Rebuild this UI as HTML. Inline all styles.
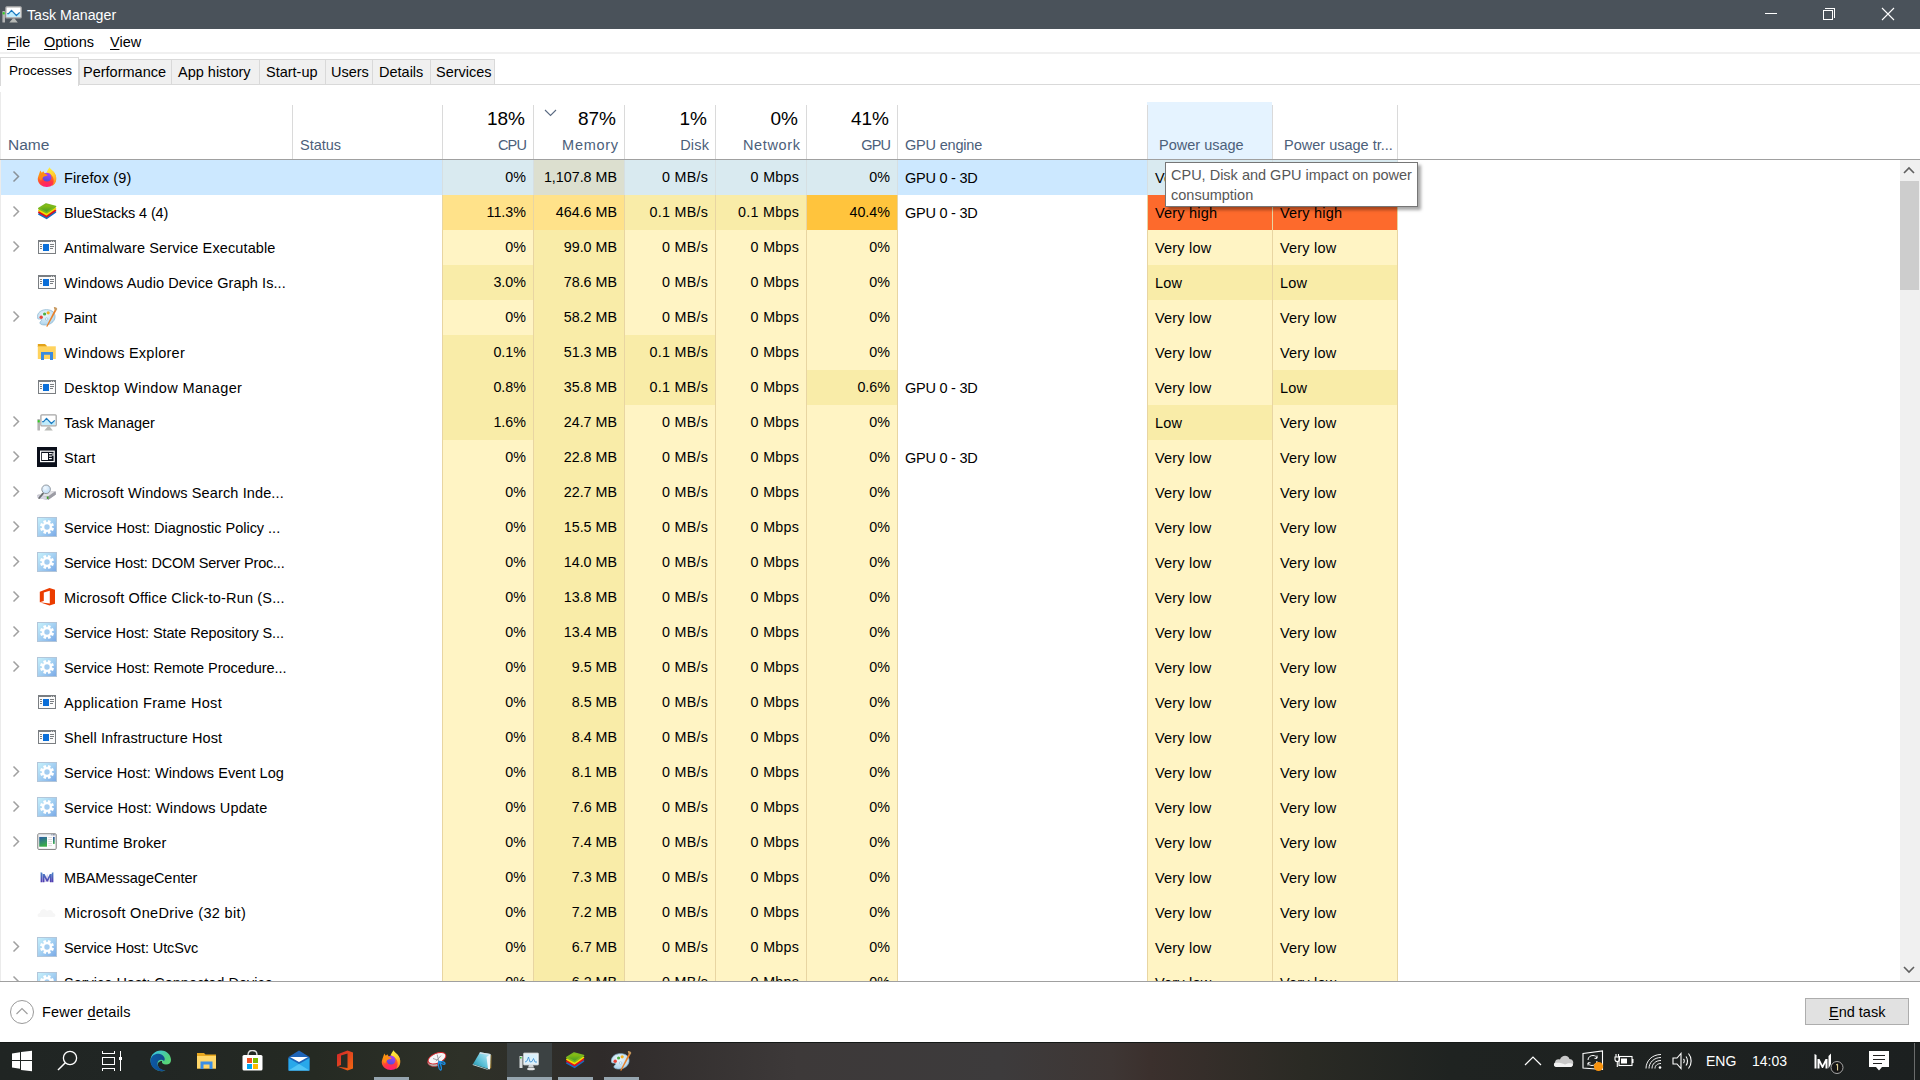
<!DOCTYPE html><html><head><meta charset="utf-8"><style>
*{margin:0;padding:0;box-sizing:border-box}
html,body{width:1920px;height:1080px;overflow:hidden;background:#fff;font-family:"Liberation Sans",sans-serif;color:#000}
.a{position:absolute}
.t{position:absolute;white-space:nowrap;font-size:14.5px;line-height:18px}
.u{text-decoration:underline;text-underline-offset:2px}
.hd{color:#4c607a}
.num{font-size:14.3px}
</style></head><body>

<div class="a" style="left:0;top:0;width:1920px;height:29px;background:#4a525a"></div>
<div class="a" style="left:2px;top:4px"><svg width="21" height="20" viewBox="0 0 21 20"><rect x="3.9" y="2.8" width="15.3" height="11" rx="0.9" fill="#fff" stroke="#a6a6a6" stroke-width="1.3"/><path d="M4.8 13 L4.8 9.6 L6.6 9.6 L9.5 6.3 L14.4 11.5 L17.7 8.4 L18.1 8.4 L18.1 13Z" fill="#c0ecfc"/><path d="M5.2 9.6 L6.6 9.6 L9.5 6.3 L14.4 11.5 L17.7 8.4" fill="none" stroke="#1a7ac0" stroke-width="1.2" stroke-linejoin="round"/><path d="M10.8 14.4 L12.6 14.4 L15.8 18.4 L7.3 18.4Z" fill="#b8bab6"/><rect x="0.4" y="7" width="2.6" height="11.6" rx="0.6" fill="#b4b4b4"/><rect x="0.7" y="8.2" width="2" height="2.2" fill="#30d020"/></svg></div>
<div class="t" style="left:27px;top:6px;color:#fff;font-size:14.2px">Task Manager</div>
<div class="a" style="left:1765px;top:13px;width:12px;height:1px;background:#fff"></div>
<div class="a" style="left:1823px;top:10px;width:10px;height:10px;border:1px solid #fff"></div>
<div class="a" style="left:1825px;top:8px;width:10px;height:10px;border-top:1px solid #fff;border-right:1px solid #fff"></div>
<svg class="a" style="left:1881px;top:7px" width="14" height="14"><path d="M1 1 L13 13 M13 1 L1 13" stroke="#fff" stroke-width="1.1"/></svg>
<div class="t" style="left:7px;top:33px"><span class="u">F</span>ile</div>
<div class="t" style="left:44px;top:33px"><span class="u">O</span>ptions</div>
<div class="t" style="left:110px;top:33px"><span class="u">V</span>iew</div>
<div class="a" style="left:0;top:52px;width:1920px;height:2px;background:#f0f0f0"></div>
<div class="a" style="left:0;top:84px;width:1920px;height:1px;background:#d9d9d9"></div>
<div class="a" style="left:0px;top:57px;width:79px;height:29px;background:#fff;border:1px solid #d9d9d9;border-bottom:none"></div>
<div class="t" style="left:9px;top:62px;font-size:13.5px">Processes</div>
<div class="a" style="left:79px;top:59px;width:93px;height:26px;background:#f0f0f0;border:1px solid #d9d9d9"></div>
<div class="t" style="left:83px;top:63px">Performance</div>
<div class="a" style="left:171px;top:59px;width:89px;height:26px;background:#f0f0f0;border:1px solid #d9d9d9"></div>
<div class="t" style="left:178px;top:63px">App history</div>
<div class="a" style="left:259px;top:59px;width:67px;height:26px;background:#f0f0f0;border:1px solid #d9d9d9"></div>
<div class="t" style="left:266px;top:63px">Start-up</div>
<div class="a" style="left:325px;top:59px;width:48px;height:26px;background:#f0f0f0;border:1px solid #d9d9d9"></div>
<div class="t" style="left:331px;top:63px">Users</div>
<div class="a" style="left:372px;top:59px;width:59px;height:26px;background:#f0f0f0;border:1px solid #d9d9d9"></div>
<div class="t" style="left:379px;top:63px">Details</div>
<div class="a" style="left:430px;top:59px;width:65px;height:26px;background:#f0f0f0;border:1px solid #d9d9d9"></div>
<div class="t" style="left:436px;top:63px">Services</div>
<div class="a" style="left:0;top:92px;width:1px;height:889px;background:#ebebeb"></div>
<div class="a" style="left:1147px;top:102px;width:125px;height:57px;background:#e5f3ff"></div>
<div class="a" style="left:292px;top:105px;width:1px;height:54px;background:#dadada"></div>
<div class="a" style="left:442px;top:105px;width:1px;height:54px;background:#dadada"></div>
<div class="a" style="left:533px;top:105px;width:1px;height:54px;background:#dadada"></div>
<div class="a" style="left:624px;top:105px;width:1px;height:54px;background:#dadada"></div>
<div class="a" style="left:715px;top:105px;width:1px;height:54px;background:#dadada"></div>
<div class="a" style="left:806px;top:105px;width:1px;height:54px;background:#dadada"></div>
<div class="a" style="left:897px;top:105px;width:1px;height:54px;background:#dadada"></div>
<div class="a" style="left:1147px;top:105px;width:1px;height:54px;background:#dadada"></div>
<div class="a" style="left:1272px;top:105px;width:1px;height:54px;background:#dadada"></div>
<div class="a" style="left:1397px;top:105px;width:1px;height:54px;background:#dadada"></div>
<div class="a" style="left:0;top:159px;width:1920px;height:1px;background:#a0a0a0"></div>
<div class="t hd" style="left:8px;top:136px;font-size:15.5px">Name</div>
<div class="t hd" style="left:300px;top:136px">Status</div>
<div class="t" style="left:442px;width:83px;top:107px;text-align:right;font-size:19px;line-height:24px">18%</div>
<div class="t hd" style="left:442px;width:84.25px;top:136px;text-align:right;letter-spacing:-0.75px">CPU</div>
<div class="t" style="left:533px;width:83px;top:107px;text-align:right;font-size:19px;line-height:24px">87%</div>
<div class="t hd" style="left:533px;width:85.70px;top:136px;text-align:right;letter-spacing:0.7px">Memory</div>
<div class="t" style="left:624px;width:83px;top:107px;text-align:right;font-size:19px;line-height:24px">1%</div>
<div class="t hd" style="left:624px;width:85.20px;top:136px;text-align:right;letter-spacing:0.2px">Disk</div>
<div class="t" style="left:715px;width:83px;top:107px;text-align:right;font-size:19px;line-height:24px">0%</div>
<div class="t hd" style="left:715px;width:85.65px;top:136px;text-align:right;letter-spacing:0.65px">Network</div>
<div class="t" style="left:806px;width:83px;top:107px;text-align:right;font-size:19px;line-height:24px">41%</div>
<div class="t hd" style="left:806px;width:84.10px;top:136px;text-align:right;letter-spacing:-0.9px">GPU</div>
<svg class="a" style="left:544px;top:109px" width="13" height="8"><path d="M1 1 L6.5 6.5 L12 1" fill="none" stroke="#5a6a82" stroke-width="1.1"/></svg>
<div class="t hd" style="left:905px;top:136px;letter-spacing:-0.2px">GPU engine</div>
<div class="t hd" style="left:1159px;top:136px">Power usage</div>
<div class="t hd" style="left:1284px;top:136px">Power usage tr...</div>
<div class="a" style="left:1px;top:160px;width:1898px;height:821px;overflow:hidden">
<div class="a" style="left:0;top:0px;width:1396px;height:35px;background:#cce8ff"></div>
<div class="a" style="left:441px;top:0px;width:91px;height:35px;background:#d9eaf0"></div>
<div class="a" style="left:532px;top:0px;width:91px;height:35px;background:#dcdfcf"></div>
<div class="a" style="left:623px;top:0px;width:91px;height:35px;background:#d9eaf0"></div>
<div class="a" style="left:714px;top:0px;width:91px;height:35px;background:#d9eaf0"></div>
<div class="a" style="left:805px;top:0px;width:91px;height:35px;background:#d9eaf0"></div>
<div class="a" style="left:1146px;top:0px;width:125px;height:35px;background:#d9eaf0"></div>
<div class="a" style="left:1271px;top:0px;width:125px;height:35px;background:#d9eaf0"></div>
<svg class="a" style="left:11px;top:10px" width="9" height="13"><path d="M1.5 1.5 L6.5 6.5 L1.5 11.5" fill="none" stroke="#8a9299" stroke-width="1.5"/></svg>
<div class="a" style="left:36px;top:7px;width:21px;height:20px"><svg width="20" height="20" viewBox="0 0 20 20"><defs><radialGradient id="ffg" cx="0.5" cy="0.95" r="0.9"><stop offset="0" stop-color="#ff1a7a"/><stop offset="0.45" stop-color="#ff3a40"/><stop offset="0.8" stop-color="#ff7a1a"/><stop offset="1" stop-color="#ffa010"/></radialGradient><linearGradient id="ffy" x1="0.2" y1="0" x2="0.6" y2="1"><stop offset="0" stop-color="#fff040"/><stop offset="0.5" stop-color="#ffd030"/><stop offset="1" stop-color="#ff8a20"/></linearGradient><linearGradient id="ffp" x1="0.6" y1="0" x2="0.3" y2="1"><stop offset="0" stop-color="#b040f8"/><stop offset="1" stop-color="#4a50d8"/></linearGradient></defs><path d="M2.2 7.5 C1 9.5 0.6 11.5 0.8 13 C1.5 17 5 20 9.8 20 C14.5 20 18 17 19 13 C19.5 10 18.5 7 16.5 4.8 L9.5 6 Z" fill="url(#ffg)"/><path d="M9.4 5.6 C10.2 3.5 11.5 1.8 12.5 0.2 C13.4 2 15.2 3.2 16.5 4.6 C18.6 7 19.6 10 19.2 13 C18.8 15.8 17.2 18 15 19.2 C16.8 16.5 17.3 13 16 10.2 C14.8 7.8 12.2 6 9.4 5.6 Z" fill="url(#ffy)"/><path d="M1.6 8.5 L3.3 3.6 L4.8 5.7 L6.3 4.2 L7.6 6.3 L5 9Z" fill="#ff9410"/><circle cx="10" cy="10.2" r="4.4" fill="url(#ffp)"/><path d="M2 9.5 C3 7 5.5 6 8 6.6 C9 6.9 9.8 7.6 10.6 8.7 C8.8 8.9 7 9.2 5.8 10.4 C5 11.2 4.5 12.5 4.3 13.5 C3 12.5 1.8 11 2 9.5Z" fill="#ff8c14"/></svg></div>
<div class="t" style="left:63px;top:9px;letter-spacing:0.120px">Firefox (9)</div>
<div class="t num" style="left:441px;width:84.00px;top:8px;text-align:right;letter-spacing:0px">0%</div>
<div class="t num" style="left:532px;width:84.00px;top:8px;text-align:right;letter-spacing:0px">1,107.8 MB</div>
<div class="t num" style="left:623px;width:84.30px;top:8px;text-align:right;letter-spacing:0.3px">0 MB/s</div>
<div class="t num" style="left:714px;width:84.30px;top:8px;text-align:right;letter-spacing:0.3px">0 Mbps</div>
<div class="t num" style="left:805px;width:84.00px;top:8px;text-align:right;letter-spacing:0px">0%</div>
<div class="t" style="left:904px;top:9px;letter-spacing:-0.25px">GPU 0 - 3D</div>
<div class="t" style="left:1154px;top:9px;letter-spacing:0.2px">Very low</div>
<div class="t" style="left:1279px;top:9px;letter-spacing:0.2px">Very low</div>
<div class="a" style="left:441px;top:35px;width:91px;height:35px;background:#ffe28a"></div>
<div class="a" style="left:532px;top:35px;width:91px;height:35px;background:#ffe28a"></div>
<div class="a" style="left:623px;top:35px;width:91px;height:35px;background:#f9eca8"></div>
<div class="a" style="left:714px;top:35px;width:91px;height:35px;background:#f9eca8"></div>
<div class="a" style="left:805px;top:35px;width:91px;height:35px;background:#ffc43d"></div>
<div class="a" style="left:1146px;top:35px;width:125px;height:35px;background:#fd6a2c"></div>
<div class="a" style="left:1271px;top:35px;width:125px;height:35px;background:#fd6a2c"></div>
<svg class="a" style="left:11px;top:45px" width="9" height="13"><path d="M1.5 1.5 L6.5 6.5 L1.5 11.5" fill="none" stroke="#a0a0a0" stroke-width="1.5"/></svg>
<div class="a" style="left:36px;top:42px;width:21px;height:20px"><svg width="20" height="20" viewBox="0 0 20 20"><defs><linearGradient id="bsg" x1="0.5" y1="0" x2="0.5" y2="1"><stop offset="0" stop-color="#9cc40a"/><stop offset="1" stop-color="#3a9a2a"/></linearGradient></defs><path d="M1.8 12.1 L9.1 7.6 L18.5 10.1 L9.6 16.4Z" fill="#1a6ac0" stroke="#1a6ac0" stroke-width="1.6" stroke-linejoin="round"/><path d="M1.8 10.3 L9.1 5.8 L18.5 8.3 L9.6 14.6Z" fill="#e0101e" stroke="#e0101e" stroke-width="1.6" stroke-linejoin="round"/><path d="M1.8 8.4 L9.1 3.9 L18.5 6.4 L9.6 12.7Z" fill="#f6dc00" stroke="#f6dc00" stroke-width="1.6" stroke-linejoin="round"/><path d="M1.8 6.5 L9.1 2.0 L18.5 4.5 L9.6 10.8Z" fill="url(#bsg)" stroke="#7ab820" stroke-width="1.6" stroke-linejoin="round"/></svg></div>
<div class="t" style="left:63px;top:44px;letter-spacing:-0.133px">BlueStacks 4 (4)</div>
<div class="t num" style="left:441px;width:84.00px;top:43px;text-align:right;letter-spacing:0px">11.3%</div>
<div class="t num" style="left:532px;width:84.00px;top:43px;text-align:right;letter-spacing:0px">464.6 MB</div>
<div class="t num" style="left:623px;width:84.30px;top:43px;text-align:right;letter-spacing:0.3px">0.1 MB/s</div>
<div class="t num" style="left:714px;width:84.30px;top:43px;text-align:right;letter-spacing:0.3px">0.1 Mbps</div>
<div class="t num" style="left:805px;width:84.00px;top:43px;text-align:right;letter-spacing:0px">40.4%</div>
<div class="t" style="left:904px;top:44px;letter-spacing:-0.25px">GPU 0 - 3D</div>
<div class="t" style="left:1154px;top:44px;letter-spacing:0.2px">Very high</div>
<div class="t" style="left:1279px;top:44px;letter-spacing:0.2px">Very high</div>
<div class="a" style="left:441px;top:70px;width:91px;height:35px;background:#fff4c4"></div>
<div class="a" style="left:532px;top:70px;width:91px;height:35px;background:#f9eca8"></div>
<div class="a" style="left:623px;top:70px;width:91px;height:35px;background:#fff4c4"></div>
<div class="a" style="left:714px;top:70px;width:91px;height:35px;background:#fff4c4"></div>
<div class="a" style="left:805px;top:70px;width:91px;height:35px;background:#fff4c4"></div>
<div class="a" style="left:1146px;top:70px;width:125px;height:35px;background:#fff4c4"></div>
<div class="a" style="left:1271px;top:70px;width:125px;height:35px;background:#fff4c4"></div>
<svg class="a" style="left:11px;top:80px" width="9" height="13"><path d="M1.5 1.5 L6.5 6.5 L1.5 11.5" fill="none" stroke="#a0a0a0" stroke-width="1.5"/></svg>
<div class="a" style="left:36px;top:77px;width:21px;height:20px"><svg width="20" height="20" viewBox="0 0 20 20"><g shape-rendering="crispEdges"><rect x="1" y="3" width="18" height="14" fill="#7a7e82"/><rect x="2" y="5" width="16" height="11" fill="#fbfbfb"/><rect x="14" y="4" width="1" height="1" fill="#d0d0d0"/><rect x="16" y="4" width="1" height="1" fill="#d0d0d0"/><rect x="6" y="7" width="6" height="7" fill="#0a6ed8"/><rect x="3" y="7" width="2" height="1" fill="#7a7e82"/><rect x="3" y="9" width="2" height="1" fill="#7a7e82"/><rect x="3" y="11" width="2" height="1" fill="#7a7e82"/><rect x="13" y="7" width="4" height="1" fill="#7a7e82"/><rect x="13" y="9" width="4" height="1" fill="#7a7e82"/><rect x="13" y="11" width="3" height="1" fill="#7a7e82"/></g></svg></div>
<div class="t" style="left:63px;top:79px;letter-spacing:0.121px">Antimalware Service Executable</div>
<div class="t num" style="left:441px;width:84.00px;top:78px;text-align:right;letter-spacing:0px">0%</div>
<div class="t num" style="left:532px;width:84.00px;top:78px;text-align:right;letter-spacing:0px">99.0 MB</div>
<div class="t num" style="left:623px;width:84.30px;top:78px;text-align:right;letter-spacing:0.3px">0 MB/s</div>
<div class="t num" style="left:714px;width:84.30px;top:78px;text-align:right;letter-spacing:0.3px">0 Mbps</div>
<div class="t num" style="left:805px;width:84.00px;top:78px;text-align:right;letter-spacing:0px">0%</div>
<div class="t" style="left:1154px;top:79px;letter-spacing:0.2px">Very low</div>
<div class="t" style="left:1279px;top:79px;letter-spacing:0.2px">Very low</div>
<div class="a" style="left:441px;top:105px;width:91px;height:35px;background:#f9eca8"></div>
<div class="a" style="left:532px;top:105px;width:91px;height:35px;background:#f9eca8"></div>
<div class="a" style="left:623px;top:105px;width:91px;height:35px;background:#fff4c4"></div>
<div class="a" style="left:714px;top:105px;width:91px;height:35px;background:#fff4c4"></div>
<div class="a" style="left:805px;top:105px;width:91px;height:35px;background:#fff4c4"></div>
<div class="a" style="left:1146px;top:105px;width:125px;height:35px;background:#f9eca8"></div>
<div class="a" style="left:1271px;top:105px;width:125px;height:35px;background:#f9eca8"></div>
<div class="a" style="left:36px;top:112px;width:21px;height:20px"><svg width="20" height="20" viewBox="0 0 20 20"><g shape-rendering="crispEdges"><rect x="1" y="3" width="18" height="14" fill="#7a7e82"/><rect x="2" y="5" width="16" height="11" fill="#fbfbfb"/><rect x="14" y="4" width="1" height="1" fill="#d0d0d0"/><rect x="16" y="4" width="1" height="1" fill="#d0d0d0"/><rect x="6" y="7" width="6" height="7" fill="#0a6ed8"/><rect x="3" y="7" width="2" height="1" fill="#7a7e82"/><rect x="3" y="9" width="2" height="1" fill="#7a7e82"/><rect x="3" y="11" width="2" height="1" fill="#7a7e82"/><rect x="13" y="7" width="4" height="1" fill="#7a7e82"/><rect x="13" y="9" width="4" height="1" fill="#7a7e82"/><rect x="13" y="11" width="3" height="1" fill="#7a7e82"/></g></svg></div>
<div class="t" style="left:63px;top:114px;letter-spacing:0.081px">Windows Audio Device Graph Is...</div>
<div class="t num" style="left:441px;width:84.00px;top:113px;text-align:right;letter-spacing:0px">3.0%</div>
<div class="t num" style="left:532px;width:84.00px;top:113px;text-align:right;letter-spacing:0px">78.6 MB</div>
<div class="t num" style="left:623px;width:84.30px;top:113px;text-align:right;letter-spacing:0.3px">0 MB/s</div>
<div class="t num" style="left:714px;width:84.30px;top:113px;text-align:right;letter-spacing:0.3px">0 Mbps</div>
<div class="t num" style="left:805px;width:84.00px;top:113px;text-align:right;letter-spacing:0px">0%</div>
<div class="t" style="left:1154px;top:114px;letter-spacing:0.2px">Low</div>
<div class="t" style="left:1279px;top:114px;letter-spacing:0.2px">Low</div>
<div class="a" style="left:441px;top:140px;width:91px;height:35px;background:#fff4c4"></div>
<div class="a" style="left:532px;top:140px;width:91px;height:35px;background:#f9eca8"></div>
<div class="a" style="left:623px;top:140px;width:91px;height:35px;background:#fff4c4"></div>
<div class="a" style="left:714px;top:140px;width:91px;height:35px;background:#fff4c4"></div>
<div class="a" style="left:805px;top:140px;width:91px;height:35px;background:#fff4c4"></div>
<div class="a" style="left:1146px;top:140px;width:125px;height:35px;background:#fff4c4"></div>
<div class="a" style="left:1271px;top:140px;width:125px;height:35px;background:#fff4c4"></div>
<svg class="a" style="left:11px;top:150px" width="9" height="13"><path d="M1.5 1.5 L6.5 6.5 L1.5 11.5" fill="none" stroke="#a0a0a0" stroke-width="1.5"/></svg>
<div class="a" style="left:36px;top:147px;width:21px;height:20px"><svg width="21" height="20" viewBox="0 0 21 20"><defs><radialGradient id="pg" cx="0.45" cy="0.35" r="0.75"><stop offset="0" stop-color="#eef7fc"/><stop offset="0.7" stop-color="#bcdcf0"/><stop offset="1" stop-color="#9ac4e2"/></radialGradient></defs><g transform="translate(-1,0)"><path d="M1.5 8.5 C2.5 4 7.5 2 12.5 2.8 C17.5 3.6 19.5 7 19 10.5 C18.5 14.5 14.5 18 9 18 C5.5 18 3.5 17 4 15.3 C4.5 13.8 6 14.2 5.6 12.8 C5.2 11.6 2.5 12.6 1.6 11.4 C1 10.5 1.2 9.5 1.5 8.5Z" fill="url(#pg)" stroke="#88b4d0" stroke-width="0.7"/><circle cx="5.2" cy="10.2" r="1.7" fill="#e8463a"/><circle cx="8.6" cy="7" r="1.6" fill="#4cae44"/><circle cx="12.2" cy="5.8" r="1.6" fill="#f5b020"/><ellipse cx="10.6" cy="12" rx="1.3" ry="1.1" fill="#fff" stroke="#88b4d0" stroke-width="0.6"/><path d="M18.8 2.4 L20.4 3.4 L11.4 19.8 L10.2 19.4Z" fill="#e8802a"/><path d="M17.8 0.2 C19 -0.2 21 0.8 21.3 2 L20.2 3.8 L18.4 2.6Z" fill="#c89a60"/></g></svg></div>
<div class="t" style="left:63px;top:149px;letter-spacing:-0.075px">Paint</div>
<div class="t num" style="left:441px;width:84.00px;top:148px;text-align:right;letter-spacing:0px">0%</div>
<div class="t num" style="left:532px;width:84.00px;top:148px;text-align:right;letter-spacing:0px">58.2 MB</div>
<div class="t num" style="left:623px;width:84.30px;top:148px;text-align:right;letter-spacing:0.3px">0 MB/s</div>
<div class="t num" style="left:714px;width:84.30px;top:148px;text-align:right;letter-spacing:0.3px">0 Mbps</div>
<div class="t num" style="left:805px;width:84.00px;top:148px;text-align:right;letter-spacing:0px">0%</div>
<div class="t" style="left:1154px;top:149px;letter-spacing:0.2px">Very low</div>
<div class="t" style="left:1279px;top:149px;letter-spacing:0.2px">Very low</div>
<div class="a" style="left:441px;top:175px;width:91px;height:35px;background:#f9eca8"></div>
<div class="a" style="left:532px;top:175px;width:91px;height:35px;background:#f9eca8"></div>
<div class="a" style="left:623px;top:175px;width:91px;height:35px;background:#f9eca8"></div>
<div class="a" style="left:714px;top:175px;width:91px;height:35px;background:#fff4c4"></div>
<div class="a" style="left:805px;top:175px;width:91px;height:35px;background:#fff4c4"></div>
<div class="a" style="left:1146px;top:175px;width:125px;height:35px;background:#fff4c4"></div>
<div class="a" style="left:1271px;top:175px;width:125px;height:35px;background:#fff4c4"></div>
<div class="a" style="left:36px;top:182px;width:21px;height:20px"><svg width="20" height="20" viewBox="0 0 20 20"><g transform="translate(-1,0)"><path d="M1.8 2 L9 2 L10.8 3.8 L10.8 5 L1.8 5Z" fill="#e2a21a"/><path d="M1.8 4.3 L19.8 4.3 L19.8 17 L1.8 17Z" fill="#ffd35e"/><path d="M5 10 L17 10 L17 18 L14 18 L14 12.8 L8 12.8 L8 18 L5 18Z" fill="#3a8ae0"/></g></svg></div>
<div class="t" style="left:63px;top:184px;letter-spacing:0.260px">Windows Explorer</div>
<div class="t num" style="left:441px;width:84.00px;top:183px;text-align:right;letter-spacing:0px">0.1%</div>
<div class="t num" style="left:532px;width:84.00px;top:183px;text-align:right;letter-spacing:0px">51.3 MB</div>
<div class="t num" style="left:623px;width:84.30px;top:183px;text-align:right;letter-spacing:0.3px">0.1 MB/s</div>
<div class="t num" style="left:714px;width:84.30px;top:183px;text-align:right;letter-spacing:0.3px">0 Mbps</div>
<div class="t num" style="left:805px;width:84.00px;top:183px;text-align:right;letter-spacing:0px">0%</div>
<div class="t" style="left:1154px;top:184px;letter-spacing:0.2px">Very low</div>
<div class="t" style="left:1279px;top:184px;letter-spacing:0.2px">Very low</div>
<div class="a" style="left:441px;top:210px;width:91px;height:35px;background:#f9eca8"></div>
<div class="a" style="left:532px;top:210px;width:91px;height:35px;background:#f9eca8"></div>
<div class="a" style="left:623px;top:210px;width:91px;height:35px;background:#f9eca8"></div>
<div class="a" style="left:714px;top:210px;width:91px;height:35px;background:#fff4c4"></div>
<div class="a" style="left:805px;top:210px;width:91px;height:35px;background:#f9eca8"></div>
<div class="a" style="left:1146px;top:210px;width:125px;height:35px;background:#fff4c4"></div>
<div class="a" style="left:1271px;top:210px;width:125px;height:35px;background:#f9eca8"></div>
<div class="a" style="left:36px;top:217px;width:21px;height:20px"><svg width="20" height="20" viewBox="0 0 20 20"><g shape-rendering="crispEdges"><rect x="1" y="3" width="18" height="14" fill="#7a7e82"/><rect x="2" y="5" width="16" height="11" fill="#fbfbfb"/><rect x="14" y="4" width="1" height="1" fill="#d0d0d0"/><rect x="16" y="4" width="1" height="1" fill="#d0d0d0"/><rect x="6" y="7" width="6" height="7" fill="#0a6ed8"/><rect x="3" y="7" width="2" height="1" fill="#7a7e82"/><rect x="3" y="9" width="2" height="1" fill="#7a7e82"/><rect x="3" y="11" width="2" height="1" fill="#7a7e82"/><rect x="13" y="7" width="4" height="1" fill="#7a7e82"/><rect x="13" y="9" width="4" height="1" fill="#7a7e82"/><rect x="13" y="11" width="3" height="1" fill="#7a7e82"/></g></svg></div>
<div class="t" style="left:63px;top:219px;letter-spacing:0.376px">Desktop Window Manager</div>
<div class="t num" style="left:441px;width:84.00px;top:218px;text-align:right;letter-spacing:0px">0.8%</div>
<div class="t num" style="left:532px;width:84.00px;top:218px;text-align:right;letter-spacing:0px">35.8 MB</div>
<div class="t num" style="left:623px;width:84.30px;top:218px;text-align:right;letter-spacing:0.3px">0.1 MB/s</div>
<div class="t num" style="left:714px;width:84.30px;top:218px;text-align:right;letter-spacing:0.3px">0 Mbps</div>
<div class="t num" style="left:805px;width:84.00px;top:218px;text-align:right;letter-spacing:0px">0.6%</div>
<div class="t" style="left:904px;top:219px;letter-spacing:-0.25px">GPU 0 - 3D</div>
<div class="t" style="left:1154px;top:219px;letter-spacing:0.2px">Very low</div>
<div class="t" style="left:1279px;top:219px;letter-spacing:0.2px">Low</div>
<div class="a" style="left:441px;top:245px;width:91px;height:35px;background:#f9eca8"></div>
<div class="a" style="left:532px;top:245px;width:91px;height:35px;background:#f9eca8"></div>
<div class="a" style="left:623px;top:245px;width:91px;height:35px;background:#fff4c4"></div>
<div class="a" style="left:714px;top:245px;width:91px;height:35px;background:#fff4c4"></div>
<div class="a" style="left:805px;top:245px;width:91px;height:35px;background:#fff4c4"></div>
<div class="a" style="left:1146px;top:245px;width:125px;height:35px;background:#f9eca8"></div>
<div class="a" style="left:1271px;top:245px;width:125px;height:35px;background:#fff4c4"></div>
<svg class="a" style="left:11px;top:255px" width="9" height="13"><path d="M1.5 1.5 L6.5 6.5 L1.5 11.5" fill="none" stroke="#a0a0a0" stroke-width="1.5"/></svg>
<div class="a" style="left:36px;top:252px;width:21px;height:20px"><svg width="21" height="20" viewBox="0 0 21 20"><rect x="3.9" y="2.8" width="15.3" height="11" rx="0.9" fill="#fff" stroke="#a6a6a6" stroke-width="1.3"/><path d="M4.8 13 L4.8 9.6 L6.6 9.6 L9.5 6.3 L14.4 11.5 L17.7 8.4 L18.1 8.4 L18.1 13Z" fill="#c0ecfc"/><path d="M5.2 9.6 L6.6 9.6 L9.5 6.3 L14.4 11.5 L17.7 8.4" fill="none" stroke="#1a7ac0" stroke-width="1.2" stroke-linejoin="round"/><path d="M10.8 14.4 L12.6 14.4 L15.8 18.4 L7.3 18.4Z" fill="#b8bab6"/><rect x="0.4" y="7" width="2.6" height="11.6" rx="0.6" fill="#b4b4b4"/><rect x="0.7" y="8.2" width="2" height="2.2" fill="#30d020"/></svg></div>
<div class="t" style="left:63px;top:254px;letter-spacing:-0.018px">Task Manager</div>
<div class="t num" style="left:441px;width:84.00px;top:253px;text-align:right;letter-spacing:0px">1.6%</div>
<div class="t num" style="left:532px;width:84.00px;top:253px;text-align:right;letter-spacing:0px">24.7 MB</div>
<div class="t num" style="left:623px;width:84.30px;top:253px;text-align:right;letter-spacing:0.3px">0 MB/s</div>
<div class="t num" style="left:714px;width:84.30px;top:253px;text-align:right;letter-spacing:0.3px">0 Mbps</div>
<div class="t num" style="left:805px;width:84.00px;top:253px;text-align:right;letter-spacing:0px">0%</div>
<div class="t" style="left:1154px;top:254px;letter-spacing:0.2px">Low</div>
<div class="t" style="left:1279px;top:254px;letter-spacing:0.2px">Very low</div>
<div class="a" style="left:441px;top:280px;width:91px;height:35px;background:#fff4c4"></div>
<div class="a" style="left:532px;top:280px;width:91px;height:35px;background:#f9eca8"></div>
<div class="a" style="left:623px;top:280px;width:91px;height:35px;background:#fff4c4"></div>
<div class="a" style="left:714px;top:280px;width:91px;height:35px;background:#fff4c4"></div>
<div class="a" style="left:805px;top:280px;width:91px;height:35px;background:#fff4c4"></div>
<div class="a" style="left:1146px;top:280px;width:125px;height:35px;background:#fff4c4"></div>
<div class="a" style="left:1271px;top:280px;width:125px;height:35px;background:#fff4c4"></div>
<svg class="a" style="left:11px;top:290px" width="9" height="13"><path d="M1.5 1.5 L6.5 6.5 L1.5 11.5" fill="none" stroke="#a0a0a0" stroke-width="1.5"/></svg>
<div class="a" style="left:36px;top:287px;width:21px;height:20px"><svg width="20" height="20" viewBox="0 0 20 20"><rect x="0" y="0" width="20" height="20" fill="#0a0f1a"/><rect x="3.6" y="4.2" width="13.6" height="10.4" fill="none" stroke="#fff" stroke-width="1.2"/><rect x="5" y="6" width="6" height="7" fill="#fff"/><rect x="12" y="6" width="2.8" height="1.2" fill="#fff"/><rect x="12" y="8.5" width="2.8" height="1.2" fill="#fff"/><rect x="12" y="11" width="2.8" height="1.2" fill="#fff"/><rect x="15.5" y="6" width="1" height="3" fill="#fff"/></svg></div>
<div class="t" style="left:63px;top:289px;letter-spacing:0.175px">Start</div>
<div class="t num" style="left:441px;width:84.00px;top:288px;text-align:right;letter-spacing:0px">0%</div>
<div class="t num" style="left:532px;width:84.00px;top:288px;text-align:right;letter-spacing:0px">22.8 MB</div>
<div class="t num" style="left:623px;width:84.30px;top:288px;text-align:right;letter-spacing:0.3px">0 MB/s</div>
<div class="t num" style="left:714px;width:84.30px;top:288px;text-align:right;letter-spacing:0.3px">0 Mbps</div>
<div class="t num" style="left:805px;width:84.00px;top:288px;text-align:right;letter-spacing:0px">0%</div>
<div class="t" style="left:904px;top:289px;letter-spacing:-0.25px">GPU 0 - 3D</div>
<div class="t" style="left:1154px;top:289px;letter-spacing:0.2px">Very low</div>
<div class="t" style="left:1279px;top:289px;letter-spacing:0.2px">Very low</div>
<div class="a" style="left:441px;top:315px;width:91px;height:35px;background:#fff4c4"></div>
<div class="a" style="left:532px;top:315px;width:91px;height:35px;background:#f9eca8"></div>
<div class="a" style="left:623px;top:315px;width:91px;height:35px;background:#fff4c4"></div>
<div class="a" style="left:714px;top:315px;width:91px;height:35px;background:#fff4c4"></div>
<div class="a" style="left:805px;top:315px;width:91px;height:35px;background:#fff4c4"></div>
<div class="a" style="left:1146px;top:315px;width:125px;height:35px;background:#fff4c4"></div>
<div class="a" style="left:1271px;top:315px;width:125px;height:35px;background:#fff4c4"></div>
<svg class="a" style="left:11px;top:325px" width="9" height="13"><path d="M1.5 1.5 L6.5 6.5 L1.5 11.5" fill="none" stroke="#a0a0a0" stroke-width="1.5"/></svg>
<div class="a" style="left:36px;top:322px;width:21px;height:20px"><svg width="20" height="20" viewBox="0 0 20 20"><defs><radialGradient id="sg" cx="0.4" cy="0.35" r="0.7"><stop offset="0" stop-color="#f4faff"/><stop offset="1" stop-color="#b8d8f4"/></radialGradient></defs><path d="M0.3 13 L8 10.5 L18.4 9.1 L18.8 12.4 L11 17.9 L0.8 16Z" fill="#a8a8b0"/><path d="M0.3 13 L8 10.5 L18.4 9.1 L11 14.6Z" fill="#e4e4e8"/><path d="M0.5 13.2 L11 14.8 L11 17.9 L0.8 16Z" fill="#d8d6e4"/><path d="M11 14.8 L18.6 9.4 L18.8 12.4 L11 17.9Z" fill="#9c9ca4"/><rect x="9.8" y="14.5" width="1.6" height="2.4" fill="#3aa020"/><path d="M6 11.5 L2.2 16" stroke="#6a6e72" stroke-width="1.9" stroke-linecap="round"/><circle cx="9.1" cy="7.3" r="4.3" fill="url(#sg)" stroke="#8a9096" stroke-width="0.9"/></svg></div>
<div class="t" style="left:63px;top:324px;letter-spacing:0.119px">Microsoft Windows Search Inde...</div>
<div class="t num" style="left:441px;width:84.00px;top:323px;text-align:right;letter-spacing:0px">0%</div>
<div class="t num" style="left:532px;width:84.00px;top:323px;text-align:right;letter-spacing:0px">22.7 MB</div>
<div class="t num" style="left:623px;width:84.30px;top:323px;text-align:right;letter-spacing:0.3px">0 MB/s</div>
<div class="t num" style="left:714px;width:84.30px;top:323px;text-align:right;letter-spacing:0.3px">0 Mbps</div>
<div class="t num" style="left:805px;width:84.00px;top:323px;text-align:right;letter-spacing:0px">0%</div>
<div class="t" style="left:1154px;top:324px;letter-spacing:0.2px">Very low</div>
<div class="t" style="left:1279px;top:324px;letter-spacing:0.2px">Very low</div>
<div class="a" style="left:441px;top:350px;width:91px;height:35px;background:#fff4c4"></div>
<div class="a" style="left:532px;top:350px;width:91px;height:35px;background:#f9eca8"></div>
<div class="a" style="left:623px;top:350px;width:91px;height:35px;background:#fff4c4"></div>
<div class="a" style="left:714px;top:350px;width:91px;height:35px;background:#fff4c4"></div>
<div class="a" style="left:805px;top:350px;width:91px;height:35px;background:#fff4c4"></div>
<div class="a" style="left:1146px;top:350px;width:125px;height:35px;background:#fff4c4"></div>
<div class="a" style="left:1271px;top:350px;width:125px;height:35px;background:#fff4c4"></div>
<svg class="a" style="left:11px;top:360px" width="9" height="13"><path d="M1.5 1.5 L6.5 6.5 L1.5 11.5" fill="none" stroke="#a0a0a0" stroke-width="1.5"/></svg>
<div class="a" style="left:36px;top:357px;width:21px;height:20px"><svg width="20" height="20" viewBox="0 0 20 20"><defs><linearGradient id="gg" x1="0" y1="0" x2="1" y2="1"><stop offset="0" stop-color="#c8f2fc"/><stop offset="0.5" stop-color="#a4d0f2"/><stop offset="1" stop-color="#78a8e6"/></linearGradient></defs><rect x="0.5" y="0.5" width="19" height="19" fill="url(#gg)" stroke="#b2c6da" stroke-width="1"/><g fill="#fff" transform="rotate(22 10 10)"><circle cx="10" cy="10" r="5"/><rect x="8.6" y="3" width="2.8" height="14"/><rect x="3" y="8.6" width="14" height="2.8"/><rect x="8.6" y="3" width="2.8" height="14" transform="rotate(45 10 10)"/><rect x="8.6" y="3" width="2.8" height="14" transform="rotate(-45 10 10)"/></g><circle cx="10" cy="10" r="2.7" fill="#a4cdf0"/></svg></div>
<div class="t" style="left:63px;top:359px;letter-spacing:-0.018px">Service Host: Diagnostic Policy ...</div>
<div class="t num" style="left:441px;width:84.00px;top:358px;text-align:right;letter-spacing:0px">0%</div>
<div class="t num" style="left:532px;width:84.00px;top:358px;text-align:right;letter-spacing:0px">15.5 MB</div>
<div class="t num" style="left:623px;width:84.30px;top:358px;text-align:right;letter-spacing:0.3px">0 MB/s</div>
<div class="t num" style="left:714px;width:84.30px;top:358px;text-align:right;letter-spacing:0.3px">0 Mbps</div>
<div class="t num" style="left:805px;width:84.00px;top:358px;text-align:right;letter-spacing:0px">0%</div>
<div class="t" style="left:1154px;top:359px;letter-spacing:0.2px">Very low</div>
<div class="t" style="left:1279px;top:359px;letter-spacing:0.2px">Very low</div>
<div class="a" style="left:441px;top:385px;width:91px;height:35px;background:#fff4c4"></div>
<div class="a" style="left:532px;top:385px;width:91px;height:35px;background:#f9eca8"></div>
<div class="a" style="left:623px;top:385px;width:91px;height:35px;background:#fff4c4"></div>
<div class="a" style="left:714px;top:385px;width:91px;height:35px;background:#fff4c4"></div>
<div class="a" style="left:805px;top:385px;width:91px;height:35px;background:#fff4c4"></div>
<div class="a" style="left:1146px;top:385px;width:125px;height:35px;background:#fff4c4"></div>
<div class="a" style="left:1271px;top:385px;width:125px;height:35px;background:#fff4c4"></div>
<svg class="a" style="left:11px;top:395px" width="9" height="13"><path d="M1.5 1.5 L6.5 6.5 L1.5 11.5" fill="none" stroke="#a0a0a0" stroke-width="1.5"/></svg>
<div class="a" style="left:36px;top:392px;width:21px;height:20px"><svg width="20" height="20" viewBox="0 0 20 20"><defs><linearGradient id="gg" x1="0" y1="0" x2="1" y2="1"><stop offset="0" stop-color="#c8f2fc"/><stop offset="0.5" stop-color="#a4d0f2"/><stop offset="1" stop-color="#78a8e6"/></linearGradient></defs><rect x="0.5" y="0.5" width="19" height="19" fill="url(#gg)" stroke="#b2c6da" stroke-width="1"/><g fill="#fff" transform="rotate(22 10 10)"><circle cx="10" cy="10" r="5"/><rect x="8.6" y="3" width="2.8" height="14"/><rect x="3" y="8.6" width="14" height="2.8"/><rect x="8.6" y="3" width="2.8" height="14" transform="rotate(45 10 10)"/><rect x="8.6" y="3" width="2.8" height="14" transform="rotate(-45 10 10)"/></g><circle cx="10" cy="10" r="2.7" fill="#a4cdf0"/></svg></div>
<div class="t" style="left:63px;top:394px;letter-spacing:-0.203px">Service Host: DCOM Server Proc...</div>
<div class="t num" style="left:441px;width:84.00px;top:393px;text-align:right;letter-spacing:0px">0%</div>
<div class="t num" style="left:532px;width:84.00px;top:393px;text-align:right;letter-spacing:0px">14.0 MB</div>
<div class="t num" style="left:623px;width:84.30px;top:393px;text-align:right;letter-spacing:0.3px">0 MB/s</div>
<div class="t num" style="left:714px;width:84.30px;top:393px;text-align:right;letter-spacing:0.3px">0 Mbps</div>
<div class="t num" style="left:805px;width:84.00px;top:393px;text-align:right;letter-spacing:0px">0%</div>
<div class="t" style="left:1154px;top:394px;letter-spacing:0.2px">Very low</div>
<div class="t" style="left:1279px;top:394px;letter-spacing:0.2px">Very low</div>
<div class="a" style="left:441px;top:420px;width:91px;height:35px;background:#fff4c4"></div>
<div class="a" style="left:532px;top:420px;width:91px;height:35px;background:#f9eca8"></div>
<div class="a" style="left:623px;top:420px;width:91px;height:35px;background:#fff4c4"></div>
<div class="a" style="left:714px;top:420px;width:91px;height:35px;background:#fff4c4"></div>
<div class="a" style="left:805px;top:420px;width:91px;height:35px;background:#fff4c4"></div>
<div class="a" style="left:1146px;top:420px;width:125px;height:35px;background:#fff4c4"></div>
<div class="a" style="left:1271px;top:420px;width:125px;height:35px;background:#fff4c4"></div>
<svg class="a" style="left:11px;top:430px" width="9" height="13"><path d="M1.5 1.5 L6.5 6.5 L1.5 11.5" fill="none" stroke="#a0a0a0" stroke-width="1.5"/></svg>
<div class="a" style="left:36px;top:427px;width:21px;height:20px"><svg width="20" height="20" viewBox="0 0 20 20"><path d="M2.8 4.8 L12.5 1 L18 2.8 L18 16.8 L12.5 18.5 L2.8 15.3 L12.8 16.6 L12.8 3.8 L6.8 5.6 L6.8 14 L2.8 15.3Z" fill="#eb3c00"/></svg></div>
<div class="t" style="left:63px;top:429px;letter-spacing:0.168px">Microsoft Office Click-to-Run (S...</div>
<div class="t num" style="left:441px;width:84.00px;top:428px;text-align:right;letter-spacing:0px">0%</div>
<div class="t num" style="left:532px;width:84.00px;top:428px;text-align:right;letter-spacing:0px">13.8 MB</div>
<div class="t num" style="left:623px;width:84.30px;top:428px;text-align:right;letter-spacing:0.3px">0 MB/s</div>
<div class="t num" style="left:714px;width:84.30px;top:428px;text-align:right;letter-spacing:0.3px">0 Mbps</div>
<div class="t num" style="left:805px;width:84.00px;top:428px;text-align:right;letter-spacing:0px">0%</div>
<div class="t" style="left:1154px;top:429px;letter-spacing:0.2px">Very low</div>
<div class="t" style="left:1279px;top:429px;letter-spacing:0.2px">Very low</div>
<div class="a" style="left:441px;top:455px;width:91px;height:35px;background:#fff4c4"></div>
<div class="a" style="left:532px;top:455px;width:91px;height:35px;background:#f9eca8"></div>
<div class="a" style="left:623px;top:455px;width:91px;height:35px;background:#fff4c4"></div>
<div class="a" style="left:714px;top:455px;width:91px;height:35px;background:#fff4c4"></div>
<div class="a" style="left:805px;top:455px;width:91px;height:35px;background:#fff4c4"></div>
<div class="a" style="left:1146px;top:455px;width:125px;height:35px;background:#fff4c4"></div>
<div class="a" style="left:1271px;top:455px;width:125px;height:35px;background:#fff4c4"></div>
<svg class="a" style="left:11px;top:465px" width="9" height="13"><path d="M1.5 1.5 L6.5 6.5 L1.5 11.5" fill="none" stroke="#a0a0a0" stroke-width="1.5"/></svg>
<div class="a" style="left:36px;top:462px;width:21px;height:20px"><svg width="20" height="20" viewBox="0 0 20 20"><defs><linearGradient id="gg" x1="0" y1="0" x2="1" y2="1"><stop offset="0" stop-color="#c8f2fc"/><stop offset="0.5" stop-color="#a4d0f2"/><stop offset="1" stop-color="#78a8e6"/></linearGradient></defs><rect x="0.5" y="0.5" width="19" height="19" fill="url(#gg)" stroke="#b2c6da" stroke-width="1"/><g fill="#fff" transform="rotate(22 10 10)"><circle cx="10" cy="10" r="5"/><rect x="8.6" y="3" width="2.8" height="14"/><rect x="3" y="8.6" width="14" height="2.8"/><rect x="8.6" y="3" width="2.8" height="14" transform="rotate(45 10 10)"/><rect x="8.6" y="3" width="2.8" height="14" transform="rotate(-45 10 10)"/></g><circle cx="10" cy="10" r="2.7" fill="#a4cdf0"/></svg></div>
<div class="t" style="left:63px;top:464px;letter-spacing:-0.097px">Service Host: State Repository S...</div>
<div class="t num" style="left:441px;width:84.00px;top:463px;text-align:right;letter-spacing:0px">0%</div>
<div class="t num" style="left:532px;width:84.00px;top:463px;text-align:right;letter-spacing:0px">13.4 MB</div>
<div class="t num" style="left:623px;width:84.30px;top:463px;text-align:right;letter-spacing:0.3px">0 MB/s</div>
<div class="t num" style="left:714px;width:84.30px;top:463px;text-align:right;letter-spacing:0.3px">0 Mbps</div>
<div class="t num" style="left:805px;width:84.00px;top:463px;text-align:right;letter-spacing:0px">0%</div>
<div class="t" style="left:1154px;top:464px;letter-spacing:0.2px">Very low</div>
<div class="t" style="left:1279px;top:464px;letter-spacing:0.2px">Very low</div>
<div class="a" style="left:441px;top:490px;width:91px;height:35px;background:#fff4c4"></div>
<div class="a" style="left:532px;top:490px;width:91px;height:35px;background:#f9eca8"></div>
<div class="a" style="left:623px;top:490px;width:91px;height:35px;background:#fff4c4"></div>
<div class="a" style="left:714px;top:490px;width:91px;height:35px;background:#fff4c4"></div>
<div class="a" style="left:805px;top:490px;width:91px;height:35px;background:#fff4c4"></div>
<div class="a" style="left:1146px;top:490px;width:125px;height:35px;background:#fff4c4"></div>
<div class="a" style="left:1271px;top:490px;width:125px;height:35px;background:#fff4c4"></div>
<svg class="a" style="left:11px;top:500px" width="9" height="13"><path d="M1.5 1.5 L6.5 6.5 L1.5 11.5" fill="none" stroke="#a0a0a0" stroke-width="1.5"/></svg>
<div class="a" style="left:36px;top:497px;width:21px;height:20px"><svg width="20" height="20" viewBox="0 0 20 20"><defs><linearGradient id="gg" x1="0" y1="0" x2="1" y2="1"><stop offset="0" stop-color="#c8f2fc"/><stop offset="0.5" stop-color="#a4d0f2"/><stop offset="1" stop-color="#78a8e6"/></linearGradient></defs><rect x="0.5" y="0.5" width="19" height="19" fill="url(#gg)" stroke="#b2c6da" stroke-width="1"/><g fill="#fff" transform="rotate(22 10 10)"><circle cx="10" cy="10" r="5"/><rect x="8.6" y="3" width="2.8" height="14"/><rect x="3" y="8.6" width="14" height="2.8"/><rect x="8.6" y="3" width="2.8" height="14" transform="rotate(45 10 10)"/><rect x="8.6" y="3" width="2.8" height="14" transform="rotate(-45 10 10)"/></g><circle cx="10" cy="10" r="2.7" fill="#a4cdf0"/></svg></div>
<div class="t" style="left:63px;top:499px;letter-spacing:-0.047px">Service Host: Remote Procedure...</div>
<div class="t num" style="left:441px;width:84.00px;top:498px;text-align:right;letter-spacing:0px">0%</div>
<div class="t num" style="left:532px;width:84.00px;top:498px;text-align:right;letter-spacing:0px">9.5 MB</div>
<div class="t num" style="left:623px;width:84.30px;top:498px;text-align:right;letter-spacing:0.3px">0 MB/s</div>
<div class="t num" style="left:714px;width:84.30px;top:498px;text-align:right;letter-spacing:0.3px">0 Mbps</div>
<div class="t num" style="left:805px;width:84.00px;top:498px;text-align:right;letter-spacing:0px">0%</div>
<div class="t" style="left:1154px;top:499px;letter-spacing:0.2px">Very low</div>
<div class="t" style="left:1279px;top:499px;letter-spacing:0.2px">Very low</div>
<div class="a" style="left:441px;top:525px;width:91px;height:35px;background:#fff4c4"></div>
<div class="a" style="left:532px;top:525px;width:91px;height:35px;background:#f9eca8"></div>
<div class="a" style="left:623px;top:525px;width:91px;height:35px;background:#fff4c4"></div>
<div class="a" style="left:714px;top:525px;width:91px;height:35px;background:#fff4c4"></div>
<div class="a" style="left:805px;top:525px;width:91px;height:35px;background:#fff4c4"></div>
<div class="a" style="left:1146px;top:525px;width:125px;height:35px;background:#fff4c4"></div>
<div class="a" style="left:1271px;top:525px;width:125px;height:35px;background:#fff4c4"></div>
<div class="a" style="left:36px;top:532px;width:21px;height:20px"><svg width="20" height="20" viewBox="0 0 20 20"><g shape-rendering="crispEdges"><rect x="1" y="3" width="18" height="14" fill="#7a7e82"/><rect x="2" y="5" width="16" height="11" fill="#fbfbfb"/><rect x="14" y="4" width="1" height="1" fill="#d0d0d0"/><rect x="16" y="4" width="1" height="1" fill="#d0d0d0"/><rect x="6" y="7" width="6" height="7" fill="#0a6ed8"/><rect x="3" y="7" width="2" height="1" fill="#7a7e82"/><rect x="3" y="9" width="2" height="1" fill="#7a7e82"/><rect x="3" y="11" width="2" height="1" fill="#7a7e82"/><rect x="13" y="7" width="4" height="1" fill="#7a7e82"/><rect x="13" y="9" width="4" height="1" fill="#7a7e82"/><rect x="13" y="11" width="3" height="1" fill="#7a7e82"/></g></svg></div>
<div class="t" style="left:63px;top:534px;letter-spacing:0.333px">Application Frame Host</div>
<div class="t num" style="left:441px;width:84.00px;top:533px;text-align:right;letter-spacing:0px">0%</div>
<div class="t num" style="left:532px;width:84.00px;top:533px;text-align:right;letter-spacing:0px">8.5 MB</div>
<div class="t num" style="left:623px;width:84.30px;top:533px;text-align:right;letter-spacing:0.3px">0 MB/s</div>
<div class="t num" style="left:714px;width:84.30px;top:533px;text-align:right;letter-spacing:0.3px">0 Mbps</div>
<div class="t num" style="left:805px;width:84.00px;top:533px;text-align:right;letter-spacing:0px">0%</div>
<div class="t" style="left:1154px;top:534px;letter-spacing:0.2px">Very low</div>
<div class="t" style="left:1279px;top:534px;letter-spacing:0.2px">Very low</div>
<div class="a" style="left:441px;top:560px;width:91px;height:35px;background:#fff4c4"></div>
<div class="a" style="left:532px;top:560px;width:91px;height:35px;background:#f9eca8"></div>
<div class="a" style="left:623px;top:560px;width:91px;height:35px;background:#fff4c4"></div>
<div class="a" style="left:714px;top:560px;width:91px;height:35px;background:#fff4c4"></div>
<div class="a" style="left:805px;top:560px;width:91px;height:35px;background:#fff4c4"></div>
<div class="a" style="left:1146px;top:560px;width:125px;height:35px;background:#fff4c4"></div>
<div class="a" style="left:1271px;top:560px;width:125px;height:35px;background:#fff4c4"></div>
<div class="a" style="left:36px;top:567px;width:21px;height:20px"><svg width="20" height="20" viewBox="0 0 20 20"><g shape-rendering="crispEdges"><rect x="1" y="3" width="18" height="14" fill="#7a7e82"/><rect x="2" y="5" width="16" height="11" fill="#fbfbfb"/><rect x="14" y="4" width="1" height="1" fill="#d0d0d0"/><rect x="16" y="4" width="1" height="1" fill="#d0d0d0"/><rect x="6" y="7" width="6" height="7" fill="#0a6ed8"/><rect x="3" y="7" width="2" height="1" fill="#7a7e82"/><rect x="3" y="9" width="2" height="1" fill="#7a7e82"/><rect x="3" y="11" width="2" height="1" fill="#7a7e82"/><rect x="13" y="7" width="4" height="1" fill="#7a7e82"/><rect x="13" y="9" width="4" height="1" fill="#7a7e82"/><rect x="13" y="11" width="3" height="1" fill="#7a7e82"/></g></svg></div>
<div class="t" style="left:63px;top:569px;letter-spacing:0.108px">Shell Infrastructure Host</div>
<div class="t num" style="left:441px;width:84.00px;top:568px;text-align:right;letter-spacing:0px">0%</div>
<div class="t num" style="left:532px;width:84.00px;top:568px;text-align:right;letter-spacing:0px">8.4 MB</div>
<div class="t num" style="left:623px;width:84.30px;top:568px;text-align:right;letter-spacing:0.3px">0 MB/s</div>
<div class="t num" style="left:714px;width:84.30px;top:568px;text-align:right;letter-spacing:0.3px">0 Mbps</div>
<div class="t num" style="left:805px;width:84.00px;top:568px;text-align:right;letter-spacing:0px">0%</div>
<div class="t" style="left:1154px;top:569px;letter-spacing:0.2px">Very low</div>
<div class="t" style="left:1279px;top:569px;letter-spacing:0.2px">Very low</div>
<div class="a" style="left:441px;top:595px;width:91px;height:35px;background:#fff4c4"></div>
<div class="a" style="left:532px;top:595px;width:91px;height:35px;background:#f9eca8"></div>
<div class="a" style="left:623px;top:595px;width:91px;height:35px;background:#fff4c4"></div>
<div class="a" style="left:714px;top:595px;width:91px;height:35px;background:#fff4c4"></div>
<div class="a" style="left:805px;top:595px;width:91px;height:35px;background:#fff4c4"></div>
<div class="a" style="left:1146px;top:595px;width:125px;height:35px;background:#fff4c4"></div>
<div class="a" style="left:1271px;top:595px;width:125px;height:35px;background:#fff4c4"></div>
<svg class="a" style="left:11px;top:605px" width="9" height="13"><path d="M1.5 1.5 L6.5 6.5 L1.5 11.5" fill="none" stroke="#a0a0a0" stroke-width="1.5"/></svg>
<div class="a" style="left:36px;top:602px;width:21px;height:20px"><svg width="20" height="20" viewBox="0 0 20 20"><defs><linearGradient id="gg" x1="0" y1="0" x2="1" y2="1"><stop offset="0" stop-color="#c8f2fc"/><stop offset="0.5" stop-color="#a4d0f2"/><stop offset="1" stop-color="#78a8e6"/></linearGradient></defs><rect x="0.5" y="0.5" width="19" height="19" fill="url(#gg)" stroke="#b2c6da" stroke-width="1"/><g fill="#fff" transform="rotate(22 10 10)"><circle cx="10" cy="10" r="5"/><rect x="8.6" y="3" width="2.8" height="14"/><rect x="3" y="8.6" width="14" height="2.8"/><rect x="8.6" y="3" width="2.8" height="14" transform="rotate(45 10 10)"/><rect x="8.6" y="3" width="2.8" height="14" transform="rotate(-45 10 10)"/></g><circle cx="10" cy="10" r="2.7" fill="#a4cdf0"/></svg></div>
<div class="t" style="left:63px;top:604px;letter-spacing:0.050px">Service Host: Windows Event Log</div>
<div class="t num" style="left:441px;width:84.00px;top:603px;text-align:right;letter-spacing:0px">0%</div>
<div class="t num" style="left:532px;width:84.00px;top:603px;text-align:right;letter-spacing:0px">8.1 MB</div>
<div class="t num" style="left:623px;width:84.30px;top:603px;text-align:right;letter-spacing:0.3px">0 MB/s</div>
<div class="t num" style="left:714px;width:84.30px;top:603px;text-align:right;letter-spacing:0.3px">0 Mbps</div>
<div class="t num" style="left:805px;width:84.00px;top:603px;text-align:right;letter-spacing:0px">0%</div>
<div class="t" style="left:1154px;top:604px;letter-spacing:0.2px">Very low</div>
<div class="t" style="left:1279px;top:604px;letter-spacing:0.2px">Very low</div>
<div class="a" style="left:441px;top:630px;width:91px;height:35px;background:#fff4c4"></div>
<div class="a" style="left:532px;top:630px;width:91px;height:35px;background:#f9eca8"></div>
<div class="a" style="left:623px;top:630px;width:91px;height:35px;background:#fff4c4"></div>
<div class="a" style="left:714px;top:630px;width:91px;height:35px;background:#fff4c4"></div>
<div class="a" style="left:805px;top:630px;width:91px;height:35px;background:#fff4c4"></div>
<div class="a" style="left:1146px;top:630px;width:125px;height:35px;background:#fff4c4"></div>
<div class="a" style="left:1271px;top:630px;width:125px;height:35px;background:#fff4c4"></div>
<svg class="a" style="left:11px;top:640px" width="9" height="13"><path d="M1.5 1.5 L6.5 6.5 L1.5 11.5" fill="none" stroke="#a0a0a0" stroke-width="1.5"/></svg>
<div class="a" style="left:36px;top:637px;width:21px;height:20px"><svg width="20" height="20" viewBox="0 0 20 20"><defs><linearGradient id="gg" x1="0" y1="0" x2="1" y2="1"><stop offset="0" stop-color="#c8f2fc"/><stop offset="0.5" stop-color="#a4d0f2"/><stop offset="1" stop-color="#78a8e6"/></linearGradient></defs><rect x="0.5" y="0.5" width="19" height="19" fill="url(#gg)" stroke="#b2c6da" stroke-width="1"/><g fill="#fff" transform="rotate(22 10 10)"><circle cx="10" cy="10" r="5"/><rect x="8.6" y="3" width="2.8" height="14"/><rect x="3" y="8.6" width="14" height="2.8"/><rect x="8.6" y="3" width="2.8" height="14" transform="rotate(45 10 10)"/><rect x="8.6" y="3" width="2.8" height="14" transform="rotate(-45 10 10)"/></g><circle cx="10" cy="10" r="2.7" fill="#a4cdf0"/></svg></div>
<div class="t" style="left:63px;top:639px;letter-spacing:0.126px">Service Host: Windows Update</div>
<div class="t num" style="left:441px;width:84.00px;top:638px;text-align:right;letter-spacing:0px">0%</div>
<div class="t num" style="left:532px;width:84.00px;top:638px;text-align:right;letter-spacing:0px">7.6 MB</div>
<div class="t num" style="left:623px;width:84.30px;top:638px;text-align:right;letter-spacing:0.3px">0 MB/s</div>
<div class="t num" style="left:714px;width:84.30px;top:638px;text-align:right;letter-spacing:0.3px">0 Mbps</div>
<div class="t num" style="left:805px;width:84.00px;top:638px;text-align:right;letter-spacing:0px">0%</div>
<div class="t" style="left:1154px;top:639px;letter-spacing:0.2px">Very low</div>
<div class="t" style="left:1279px;top:639px;letter-spacing:0.2px">Very low</div>
<div class="a" style="left:441px;top:665px;width:91px;height:35px;background:#fff4c4"></div>
<div class="a" style="left:532px;top:665px;width:91px;height:35px;background:#f9eca8"></div>
<div class="a" style="left:623px;top:665px;width:91px;height:35px;background:#fff4c4"></div>
<div class="a" style="left:714px;top:665px;width:91px;height:35px;background:#fff4c4"></div>
<div class="a" style="left:805px;top:665px;width:91px;height:35px;background:#fff4c4"></div>
<div class="a" style="left:1146px;top:665px;width:125px;height:35px;background:#fff4c4"></div>
<div class="a" style="left:1271px;top:665px;width:125px;height:35px;background:#fff4c4"></div>
<svg class="a" style="left:11px;top:675px" width="9" height="13"><path d="M1.5 1.5 L6.5 6.5 L1.5 11.5" fill="none" stroke="#a0a0a0" stroke-width="1.5"/></svg>
<div class="a" style="left:36px;top:672px;width:21px;height:20px"><svg width="20" height="20" viewBox="0 0 20 20"><defs><linearGradient id="bg1" x1="0" y1="0" x2="0.3" y2="1"><stop offset="0" stop-color="#2a5aa8"/><stop offset="1" stop-color="#3aac48"/></linearGradient><linearGradient id="bg2" x1="0" y1="0" x2="0" y2="1"><stop offset="0" stop-color="#2a4aa8"/><stop offset="1" stop-color="#3ab448"/></linearGradient></defs><rect x="0.8" y="1.8" width="18.4" height="15.6" rx="1" fill="#fdfdfd" stroke="#7a7a7a" stroke-width="1"/><rect x="1.5" y="2.4" width="17" height="1" fill="#d8dce4"/><rect x="14.5" y="2.4" width="0.8" height="0.9" fill="#3a4a6a"/><rect x="16" y="2.4" width="0.8" height="0.9" fill="#3a4a6a"/><rect x="17.4" y="2.4" width="0.8" height="0.9" fill="#3a4a6a"/><rect x="2.2" y="4.9" width="7.8" height="9.8" fill="url(#bg1)"/><g fill="#d4d4d4"><rect x="11.3" y="5" width="3.7" height="0.8"/><rect x="11.3" y="7.1" width="3.7" height="0.8"/><rect x="11.3" y="9.1" width="3.7" height="0.8"/><rect x="11.3" y="11.1" width="3.7" height="0.8"/><rect x="11.3" y="13.3" width="3.7" height="0.8"/></g><rect x="16" y="4.9" width="1.7" height="7" fill="url(#bg2)"/></svg></div>
<div class="t" style="left:63px;top:674px;letter-spacing:0.123px">Runtime Broker</div>
<div class="t num" style="left:441px;width:84.00px;top:673px;text-align:right;letter-spacing:0px">0%</div>
<div class="t num" style="left:532px;width:84.00px;top:673px;text-align:right;letter-spacing:0px">7.4 MB</div>
<div class="t num" style="left:623px;width:84.30px;top:673px;text-align:right;letter-spacing:0.3px">0 MB/s</div>
<div class="t num" style="left:714px;width:84.30px;top:673px;text-align:right;letter-spacing:0.3px">0 Mbps</div>
<div class="t num" style="left:805px;width:84.00px;top:673px;text-align:right;letter-spacing:0px">0%</div>
<div class="t" style="left:1154px;top:674px;letter-spacing:0.2px">Very low</div>
<div class="t" style="left:1279px;top:674px;letter-spacing:0.2px">Very low</div>
<div class="a" style="left:441px;top:700px;width:91px;height:35px;background:#fff4c4"></div>
<div class="a" style="left:532px;top:700px;width:91px;height:35px;background:#f9eca8"></div>
<div class="a" style="left:623px;top:700px;width:91px;height:35px;background:#fff4c4"></div>
<div class="a" style="left:714px;top:700px;width:91px;height:35px;background:#fff4c4"></div>
<div class="a" style="left:805px;top:700px;width:91px;height:35px;background:#fff4c4"></div>
<div class="a" style="left:1146px;top:700px;width:125px;height:35px;background:#fff4c4"></div>
<div class="a" style="left:1271px;top:700px;width:125px;height:35px;background:#fff4c4"></div>
<div class="a" style="left:36px;top:707px;width:21px;height:20px"><svg width="20" height="20" viewBox="0 0 20 20"><defs><linearGradient id="mg" x1="0" y1="0" x2="0" y2="1"><stop offset="0" stop-color="#4a86c8"/><stop offset="1" stop-color="#5038b0"/></linearGradient></defs><path d="M5.5 6.5 L8 12 L10.3 7 L12.6 12 L14.8 6.5 L14.8 15 L5.5 15Z" fill="#d8d4ec"/><path d="M3.6 5.2 L5.4 5.8 L5.4 15.2 L3.6 15.2Z M5.8 7 L7.6 7 L10.2 12.2 L12.8 7 L14.6 7 L14.6 15.2 L13 15.2 L13 10.2 L10.8 14.6 L9.6 14.6 L7.4 10.2 L7.4 15.2 L5.8 15.2Z M14.8 5.8 L16.4 5.2 L16.4 15.2 L14.8 15.2Z" fill="url(#mg)"/></svg></div>
<div class="t" style="left:63px;top:709px;letter-spacing:-0.033px">MBAMessageCenter</div>
<div class="t num" style="left:441px;width:84.00px;top:708px;text-align:right;letter-spacing:0px">0%</div>
<div class="t num" style="left:532px;width:84.00px;top:708px;text-align:right;letter-spacing:0px">7.3 MB</div>
<div class="t num" style="left:623px;width:84.30px;top:708px;text-align:right;letter-spacing:0.3px">0 MB/s</div>
<div class="t num" style="left:714px;width:84.30px;top:708px;text-align:right;letter-spacing:0.3px">0 Mbps</div>
<div class="t num" style="left:805px;width:84.00px;top:708px;text-align:right;letter-spacing:0px">0%</div>
<div class="t" style="left:1154px;top:709px;letter-spacing:0.2px">Very low</div>
<div class="t" style="left:1279px;top:709px;letter-spacing:0.2px">Very low</div>
<div class="a" style="left:441px;top:735px;width:91px;height:35px;background:#fff4c4"></div>
<div class="a" style="left:532px;top:735px;width:91px;height:35px;background:#f9eca8"></div>
<div class="a" style="left:623px;top:735px;width:91px;height:35px;background:#fff4c4"></div>
<div class="a" style="left:714px;top:735px;width:91px;height:35px;background:#fff4c4"></div>
<div class="a" style="left:805px;top:735px;width:91px;height:35px;background:#fff4c4"></div>
<div class="a" style="left:1146px;top:735px;width:125px;height:35px;background:#fff4c4"></div>
<div class="a" style="left:1271px;top:735px;width:125px;height:35px;background:#fff4c4"></div>
<div class="a" style="left:36px;top:742px;width:21px;height:20px"><svg width="20" height="20" viewBox="0 0 20 20"><path d="M2 15 C0 15 0 11 3 11 C3 7 8 6 10 9 C12 7 16 8 16 11 C19 11 19 15 17 15Z" fill="#f6f6f6"/></svg></div>
<div class="t" style="left:63px;top:744px;letter-spacing:0.327px">Microsoft OneDrive (32 bit)</div>
<div class="t num" style="left:441px;width:84.00px;top:743px;text-align:right;letter-spacing:0px">0%</div>
<div class="t num" style="left:532px;width:84.00px;top:743px;text-align:right;letter-spacing:0px">7.2 MB</div>
<div class="t num" style="left:623px;width:84.30px;top:743px;text-align:right;letter-spacing:0.3px">0 MB/s</div>
<div class="t num" style="left:714px;width:84.30px;top:743px;text-align:right;letter-spacing:0.3px">0 Mbps</div>
<div class="t num" style="left:805px;width:84.00px;top:743px;text-align:right;letter-spacing:0px">0%</div>
<div class="t" style="left:1154px;top:744px;letter-spacing:0.2px">Very low</div>
<div class="t" style="left:1279px;top:744px;letter-spacing:0.2px">Very low</div>
<div class="a" style="left:441px;top:770px;width:91px;height:35px;background:#fff4c4"></div>
<div class="a" style="left:532px;top:770px;width:91px;height:35px;background:#f9eca8"></div>
<div class="a" style="left:623px;top:770px;width:91px;height:35px;background:#fff4c4"></div>
<div class="a" style="left:714px;top:770px;width:91px;height:35px;background:#fff4c4"></div>
<div class="a" style="left:805px;top:770px;width:91px;height:35px;background:#fff4c4"></div>
<div class="a" style="left:1146px;top:770px;width:125px;height:35px;background:#fff4c4"></div>
<div class="a" style="left:1271px;top:770px;width:125px;height:35px;background:#fff4c4"></div>
<svg class="a" style="left:11px;top:780px" width="9" height="13"><path d="M1.5 1.5 L6.5 6.5 L1.5 11.5" fill="none" stroke="#a0a0a0" stroke-width="1.5"/></svg>
<div class="a" style="left:36px;top:777px;width:21px;height:20px"><svg width="20" height="20" viewBox="0 0 20 20"><defs><linearGradient id="gg" x1="0" y1="0" x2="1" y2="1"><stop offset="0" stop-color="#c8f2fc"/><stop offset="0.5" stop-color="#a4d0f2"/><stop offset="1" stop-color="#78a8e6"/></linearGradient></defs><rect x="0.5" y="0.5" width="19" height="19" fill="url(#gg)" stroke="#b2c6da" stroke-width="1"/><g fill="#fff" transform="rotate(22 10 10)"><circle cx="10" cy="10" r="5"/><rect x="8.6" y="3" width="2.8" height="14"/><rect x="3" y="8.6" width="14" height="2.8"/><rect x="8.6" y="3" width="2.8" height="14" transform="rotate(45 10 10)"/><rect x="8.6" y="3" width="2.8" height="14" transform="rotate(-45 10 10)"/></g><circle cx="10" cy="10" r="2.7" fill="#a4cdf0"/></svg></div>
<div class="t" style="left:63px;top:779px;letter-spacing:-0.105px">Service Host: UtcSvc</div>
<div class="t num" style="left:441px;width:84.00px;top:778px;text-align:right;letter-spacing:0px">0%</div>
<div class="t num" style="left:532px;width:84.00px;top:778px;text-align:right;letter-spacing:0px">6.7 MB</div>
<div class="t num" style="left:623px;width:84.30px;top:778px;text-align:right;letter-spacing:0.3px">0 MB/s</div>
<div class="t num" style="left:714px;width:84.30px;top:778px;text-align:right;letter-spacing:0.3px">0 Mbps</div>
<div class="t num" style="left:805px;width:84.00px;top:778px;text-align:right;letter-spacing:0px">0%</div>
<div class="t" style="left:1154px;top:779px;letter-spacing:0.2px">Very low</div>
<div class="t" style="left:1279px;top:779px;letter-spacing:0.2px">Very low</div>
<div class="a" style="left:441px;top:805px;width:91px;height:35px;background:#fff4c4"></div>
<div class="a" style="left:532px;top:805px;width:91px;height:35px;background:#f9eca8"></div>
<div class="a" style="left:623px;top:805px;width:91px;height:35px;background:#fff4c4"></div>
<div class="a" style="left:714px;top:805px;width:91px;height:35px;background:#fff4c4"></div>
<div class="a" style="left:805px;top:805px;width:91px;height:35px;background:#fff4c4"></div>
<div class="a" style="left:1146px;top:805px;width:125px;height:35px;background:#fff4c4"></div>
<div class="a" style="left:1271px;top:805px;width:125px;height:35px;background:#fff4c4"></div>
<svg class="a" style="left:11px;top:815px" width="9" height="13"><path d="M1.5 1.5 L6.5 6.5 L1.5 11.5" fill="none" stroke="#a0a0a0" stroke-width="1.5"/></svg>
<div class="a" style="left:36px;top:812px;width:21px;height:20px"><svg width="20" height="20" viewBox="0 0 20 20"><defs><linearGradient id="gg" x1="0" y1="0" x2="1" y2="1"><stop offset="0" stop-color="#c8f2fc"/><stop offset="0.5" stop-color="#a4d0f2"/><stop offset="1" stop-color="#78a8e6"/></linearGradient></defs><rect x="0.5" y="0.5" width="19" height="19" fill="url(#gg)" stroke="#b2c6da" stroke-width="1"/><g fill="#fff" transform="rotate(22 10 10)"><circle cx="10" cy="10" r="5"/><rect x="8.6" y="3" width="2.8" height="14"/><rect x="3" y="8.6" width="14" height="2.8"/><rect x="8.6" y="3" width="2.8" height="14" transform="rotate(45 10 10)"/><rect x="8.6" y="3" width="2.8" height="14" transform="rotate(-45 10 10)"/></g><circle cx="10" cy="10" r="2.7" fill="#a4cdf0"/></svg></div>
<div class="t" style="left:63px;top:814px;letter-spacing:0.000px">Service Host: Connected Device...</div>
<div class="t num" style="left:441px;width:84.00px;top:813px;text-align:right;letter-spacing:0px">0%</div>
<div class="t num" style="left:532px;width:84.00px;top:813px;text-align:right;letter-spacing:0px">6.2 MB</div>
<div class="t num" style="left:623px;width:84.30px;top:813px;text-align:right;letter-spacing:0.3px">0 MB/s</div>
<div class="t num" style="left:714px;width:84.30px;top:813px;text-align:right;letter-spacing:0.3px">0 Mbps</div>
<div class="t num" style="left:805px;width:84.00px;top:813px;text-align:right;letter-spacing:0px">0%</div>
<div class="t" style="left:1154px;top:814px;letter-spacing:0.2px">Very low</div>
<div class="t" style="left:1279px;top:814px;letter-spacing:0.2px">Very low</div>
<div class="a" style="left:441px;top:0;width:1px;height:821px;background:#e8d5a2"></div>
<div class="a" style="left:441px;top:0;width:1px;height:35px;background:#d6dfe2"></div>
<div class="a" style="left:532px;top:0;width:1px;height:821px;background:#e8d5a2"></div>
<div class="a" style="left:532px;top:0;width:1px;height:35px;background:#d6dfe2"></div>
<div class="a" style="left:623px;top:0;width:1px;height:821px;background:#e8d5a2"></div>
<div class="a" style="left:623px;top:0;width:1px;height:35px;background:#d6dfe2"></div>
<div class="a" style="left:714px;top:0;width:1px;height:821px;background:#e8d5a2"></div>
<div class="a" style="left:714px;top:0;width:1px;height:35px;background:#d6dfe2"></div>
<div class="a" style="left:805px;top:0;width:1px;height:821px;background:#e8d5a2"></div>
<div class="a" style="left:805px;top:0;width:1px;height:35px;background:#d6dfe2"></div>
<div class="a" style="left:896px;top:0;width:1px;height:821px;background:#e8d5a2"></div>
<div class="a" style="left:896px;top:0;width:1px;height:35px;background:#d6dfe2"></div>
<div class="a" style="left:1146px;top:0;width:1px;height:821px;background:#e8d5a2"></div>
<div class="a" style="left:1146px;top:0;width:1px;height:35px;background:#d6dfe2"></div>
<div class="a" style="left:1271px;top:0;width:1px;height:821px;background:#e8d5a2"></div>
<div class="a" style="left:1271px;top:0;width:1px;height:35px;background:#d6dfe2"></div>
<div class="a" style="left:1396px;top:0;width:1px;height:821px;background:#e8d5a2"></div>
<div class="a" style="left:1396px;top:0;width:1px;height:35px;background:#d6dfe2"></div>
</div>
<div class="a" style="left:1900px;top:160px;width:20px;height:821px;background:#f0f0f0"></div>
<svg class="a" style="left:1902px;top:164px" width="14" height="12"><path d="M2 9 L7 4 L12 9" fill="none" stroke="#606060" stroke-width="1.6"/></svg>
<div class="a" style="left:1900px;top:181px;width:19px;height:109px;background:#cdcdcd"></div>
<svg class="a" style="left:1902px;top:964px" width="14" height="12"><path d="M2 3 L7 8 L12 3" fill="none" stroke="#606060" stroke-width="1.6"/></svg>
<div class="a" style="left:0;top:981px;width:1920px;height:1px;background:#a0a0a0"></div>
<div class="a" style="left:1165px;top:162px;width:253px;height:45px;background:#fff;border:1px solid #767676;box-shadow:3px 3px 3px rgba(0,0,0,0.35)"></div>
<div class="t" style="left:1171px;top:165px;color:#575757;line-height:20px">CPU, Disk and GPU impact on power<br>consumption</div>
<div class="a" style="left:10px;top:1000px;width:24px;height:24px;border:1px solid #9a9a9a;border-radius:50%"></div>
<svg class="a" style="left:15px;top:1006px" width="14" height="10"><path d="M1.5 8 L7 2.5 L12.5 8" fill="none" stroke="#a0a0a0" stroke-width="1.2"/></svg>
<div class="t" style="left:42px;top:1003px;letter-spacing:0.19px">Fewer <span class="u">d</span>etails</div>
<div class="a" style="left:1805px;top:998px;width:104px;height:27px;background:#e1e1e1;border:1px solid #adadad"></div>
<div class="t" style="left:1829px;top:1003px"><span class="u">E</span>nd task</div>
<div class="a" style="left:0;top:1042px;width:1920px;height:38px;background:linear-gradient(90deg,#202523 0px,#212624 140px,#252a23 315px,#2e3128 462px,#2f2b2a 600px,#3d3939 797px,#3d3b3c 1000px,#3e3634 1112px,#3b302d 1150px,#2a2a24 1307px,#1f2321 1450px,#1c2020 1920px)"></div>
<div class="a" style="left:0;top:1042px;width:1920px;height:1px;background:#151917"></div>
<div class="a" style="left:507px;top:1043px;width:45px;height:37px;background:#3c4243"></div>
<div class="a" style="left:374px;top:1077px;width:35px;height:3px;background:#96a5af"></div>
<div class="a" style="left:507px;top:1077px;width:45px;height:3px;background:#96a5af"></div>
<div class="a" style="left:558px;top:1077px;width:35px;height:3px;background:#96a5af"></div>
<div class="a" style="left:604px;top:1077px;width:35px;height:3px;background:#96a5af"></div>
<svg class="a" style="left:12px;top:1050px" width="21" height="22" viewBox="0 0 21 22"><path d="M0 3.4 L8 2.3 L8 10 L0 10Z M9 2.1 L20 0.7 L20 10 L9 10Z M0 11 L8 11 L8 18.7 L0 17.6Z M9 11 L20 11 L20 21.2 L9 19.9Z" fill="#fff"/></svg>
<svg class="a" style="left:56px;top:1050px" width="22" height="22" viewBox="0 0 22 22"><circle cx="14" cy="8" r="6.6" fill="none" stroke="#fff" stroke-width="1.3"/><path d="M9.3 12.7 L2 20" stroke="#fff" stroke-width="1.5"/></svg>
<svg class="a" style="left:101px;top:1050px" width="22" height="22" viewBox="0 0 22 22"><g fill="#fff" shape-rendering="crispEdges"><rect x="1" y="1" width="1" height="3"/><rect x="13" y="1" width="1" height="3"/><rect x="1" y="3" width="13" height="1"/><rect x="1" y="7" width="13" height="1"/><rect x="1" y="14" width="13" height="1"/><rect x="1" y="7" width="1" height="8"/><rect x="13" y="7" width="1" height="8"/><rect x="1" y="18" width="13" height="1"/><rect x="1" y="18" width="1" height="3"/><rect x="13" y="18" width="1" height="3"/><rect x="19" y="1" width="1" height="20"/><rect x="18" y="7" width="3" height="3"/></g></svg>
<svg class="a" style="left:150px;top:1050px" width="22" height="22" viewBox="0 0 22 22"><defs><linearGradient id="eg1" x1="0" y1="0" x2="1" y2="1"><stop offset="0" stop-color="#35c1f1"/><stop offset="0.6" stop-color="#52d17e"/><stop offset="1" stop-color="#66e070"/></linearGradient><linearGradient id="eg2" x1="0" y1="0" x2="1" y2="0"><stop offset="0" stop-color="#0c59a4"/><stop offset="1" stop-color="#114a8b"/></linearGradient></defs><path d="M11 0.5 C17 0.5 21 5 21 10 C21 13 19 14.5 16 14.5 C13 14.5 11.5 13 12 11 C9 11 7 13.5 8 16 C9 19 12.5 20.8 15.5 20.5 C13 21.5 10.5 21.5 8 20.5 C3 18.5 0.5 14 0.5 10 C0.5 5 5 0.5 11 0.5Z" fill="url(#eg1)"/><path d="M0.5 10 C1.5 5 6 3 10 4 C14 5 16 9 14 11 C12 9 8 9.5 7.5 13 C7 16.5 10.5 20 15.5 20.5 C12 22 6 21 3 17.5 C1 15.5 0.3 12.5 0.5 10Z" fill="url(#eg2)"/></svg>
<svg class="a" style="left:197px;top:1052px" width="20" height="17" viewBox="0 0 20 17"><path d="M0 1 L7 1 L8.5 2.5 L19 2.5 L19 16.5 L0 16.5Z" fill="#e8a820"/><path d="M0 4 L19 4 L19 16.5 L0 16.5Z" fill="#ffd76a"/><path d="M3.5 9.5 L15.5 9.5 L15.5 17 L12.5 17 L12.5 12.5 L6.5 12.5 L6.5 17 L3.5 17Z" fill="#3a8ee6"/></svg>
<svg class="a" style="left:242px;top:1050px" width="21" height="21" viewBox="0 0 21 21"><path d="M6 5 C6 1 8 0.5 10.5 0.5 C13 0.5 15 1 15 5" fill="none" stroke="#ddd" stroke-width="1.3"/><rect x="0.5" y="5" width="20" height="15.5" rx="1.5" fill="#fff"/><rect x="5" y="8" width="5" height="5" fill="#f25022"/><rect x="11" y="8" width="5" height="5" fill="#7fba00"/><rect x="5" y="14" width="5" height="5" fill="#00a4ef"/><rect x="11" y="14" width="5" height="5" fill="#ffb900"/></svg>
<svg class="a" style="left:288px;top:1050px" width="22" height="21" viewBox="0 0 22 21"><path d="M0.5 7 L11 0.5 L21.5 7 L21.5 20.5 L0.5 20.5Z" fill="#1e64b8"/><path d="M2 7 L20 7 L11 12Z" fill="#fff"/><path d="M0.5 8 L11 14 L21.5 8 L21.5 20.5 L0.5 20.5Z" fill="#28a8ea"/><path d="M0.5 20.5 L11 14 L21.5 20.5Z" fill="#50c4f5"/></svg>
<svg class="a" style="left:336px;top:1050px" width="18" height="21" viewBox="0 0 18 21"><defs><linearGradient id="og" x1="0" y1="0" x2="1" y2="1"><stop offset="0" stop-color="#d2232b"/><stop offset="1" stop-color="#f06a10"/></linearGradient></defs><path d="M1 4.5 L11.5 0.5 L17 2.5 L17 18.5 L11.5 20.5 L1 16.5 L11.5 18 L11.5 3.5 L5 5.5 L5 15 L1 16.5Z" fill="url(#og)"/></svg>
<svg class="a" style="left:381px;top:1050px" width="20" height="21" viewBox="0 0 20 21"><g><defs><radialGradient id="tffg" cx="0.5" cy="0.95" r="0.9"><stop offset="0" stop-color="#ff1a7a"/><stop offset="0.45" stop-color="#ff3a40"/><stop offset="0.8" stop-color="#ff7a1a"/><stop offset="1" stop-color="#ffa010"/></radialGradient><linearGradient id="tffy" x1="0.2" y1="0" x2="0.6" y2="1"><stop offset="0" stop-color="#fff040"/><stop offset="0.5" stop-color="#ffd030"/><stop offset="1" stop-color="#ff8a20"/></linearGradient><linearGradient id="tffp" x1="0.6" y1="0" x2="0.3" y2="1"><stop offset="0" stop-color="#b040f8"/><stop offset="1" stop-color="#4a50d8"/></linearGradient></defs><path d="M2.2 7.5 C1 9.5 0.6 11.5 0.8 13 C1.5 17 5 20 9.8 20 C14.5 20 18 17 19 13 C19.5 10 18.5 7 16.5 4.8 L9.5 6 Z" fill="url(#tffg)"/><path d="M9.4 5.6 C10.2 3.5 11.5 1.8 12.5 0.2 C13.4 2 15.2 3.2 16.5 4.6 C18.6 7 19.6 10 19.2 13 C18.8 15.8 17.2 18 15 19.2 C16.8 16.5 17.3 13 16 10.2 C14.8 7.8 12.2 6 9.4 5.6 Z" fill="url(#tffy)"/><path d="M1.6 8.5 L3.3 3.6 L4.8 5.7 L6.3 4.2 L7.6 6.3 L5 9Z" fill="#ff9410"/><circle cx="10" cy="10.2" r="4.4" fill="url(#tffp)"/><path d="M2 9.5 C3 7 5.5 6 8 6.6 C9 6.9 9.8 7.6 10.6 8.7 C8.8 8.9 7 9.2 5.8 10.4 C5 11.2 4.5 12.5 4.3 13.5 C3 12.5 1.8 11 2 9.5Z" fill="#ff8c14"/></g></svg>
<svg class="a" style="left:427px;top:1051px" width="21" height="21" viewBox="0 0 21 21"><path d="M0.6 10.5 C0.2 13 3 15.5 7 15.6 C9 15.6 10.5 15 11 14.5 L10 11 Z" fill="#b4b4b4" stroke="#d02a30" stroke-width="0.6"/><ellipse cx="10" cy="7.2" rx="9.4" ry="4.9" transform="rotate(-22 10 7.2)" fill="#f6f6f8" stroke="#d8282e" stroke-width="0.9"/><path d="M10.2 3.6 L11.8 10.6 M14 4.6 L9 10.2 M6 7.5 L10.5 9" stroke="#8a8a90" stroke-width="0.8" fill="none"/><path d="M11.8 10.5 C11 13 11.5 18.5 13.4 19 C15 19.3 14.8 15 12.2 11.2 C14.5 12.5 18.5 14.5 18 12.2 C17.5 10.5 14 10.5 11.8 10.5Z" fill="none" stroke="#1a8ae0" stroke-width="1.3"/></svg>
<svg class="a" style="left:472px;top:1052px" width="21" height="19" viewBox="0 0 21 19"><defs><linearGradient id="npg" x1="0" y1="1" x2="1" y2="0"><stop offset="0" stop-color="#1a8aa0"/><stop offset="0.45" stop-color="#5cc0d8"/><stop offset="1" stop-color="#c8eef8"/></linearGradient></defs><path d="M18.4 2.6 L19.4 3.2 L19.2 16.2 L18.2 16.6Z" fill="#b88a30"/><path d="M8 0.3 L18.4 1.9 L18 17.3 L0.9 12.3Z" fill="url(#npg)"/><path d="M14.5 5 L18.4 2.2 L18 17.3 L16 17.2Z" fill="#eef4f8"/><path d="M8 0.3 L18.4 1.9 L18.2 3 L7.3 1.6Z" fill="#d8e2ea"/><path d="M0.9 12.3 L16 17.2 L15.5 17.8 L0.6 12.9Z" fill="#c8e8f0"/></svg>
<svg class="a" style="left:519px;top:1052px" width="21" height="19" viewBox="0 0 21 19"><rect x="4.5" y="1" width="15" height="12" rx="0.8" fill="#eef2f4" stroke="#c0c6ca" stroke-width="0.8"/><rect x="5.8" y="2.3" width="12.4" height="9.4" fill="#d8f0fc"/><path d="M6 10 L8 9 L9.5 5 L11 10 L13 9.5 L14.5 6.5 L16 10 L18 10" fill="none" stroke="#3a8ad0" stroke-width="0.8"/><path d="M10 13 L14 13 L15 15.5 L9 15.5Z" fill="#d0d4d8"/><ellipse cx="12" cy="17" rx="4" ry="1.3" fill="#e0e2e4"/><rect x="0.5" y="4" width="3" height="12" fill="#d8dcde"/><rect x="1" y="5" width="1.5" height="1.5" fill="#30c030"/></svg>
<svg class="a" style="left:565px;top:1051px" width="20" height="20" viewBox="0 0 20 20"><defs><linearGradient id="tbsg" x1="0.5" y1="0" x2="0.5" y2="1"><stop offset="0" stop-color="#9cc40a"/><stop offset="1" stop-color="#3a9a2a"/></linearGradient></defs><path d="M1.8 12.1 L9.1 7.6 L18.5 10.1 L9.6 16.4Z" fill="#1a6ac0" stroke="#1a6ac0" stroke-width="1.6" stroke-linejoin="round"/><path d="M1.8 10.3 L9.1 5.8 L18.5 8.3 L9.6 14.6Z" fill="#e0101e" stroke="#e0101e" stroke-width="1.6" stroke-linejoin="round"/><path d="M1.8 8.4 L9.1 3.9 L18.5 6.4 L9.6 12.7Z" fill="#f6dc00" stroke="#f6dc00" stroke-width="1.6" stroke-linejoin="round"/><path d="M1.8 6.5 L9.1 2.0 L18.5 4.5 L9.6 10.8Z" fill="url(#tbsg)" stroke="#7ab820" stroke-width="1.6" stroke-linejoin="round"/></svg>
<svg class="a" style="left:611px;top:1051px" width="21" height="20" viewBox="0 0 21 20"><defs><radialGradient id="tpg" cx="0.45" cy="0.35" r="0.75"><stop offset="0" stop-color="#eef7fc"/><stop offset="0.7" stop-color="#bcdcf0"/><stop offset="1" stop-color="#9ac4e2"/></radialGradient></defs><g transform="translate(-1,0)"><path d="M1.5 8.5 C2.5 4 7.5 2 12.5 2.8 C17.5 3.6 19.5 7 19 10.5 C18.5 14.5 14.5 18 9 18 C5.5 18 3.5 17 4 15.3 C4.5 13.8 6 14.2 5.6 12.8 C5.2 11.6 2.5 12.6 1.6 11.4 C1 10.5 1.2 9.5 1.5 8.5Z" fill="url(#tpg)" stroke="#88b4d0" stroke-width="0.7"/><circle cx="5.2" cy="10.2" r="1.7" fill="#e8463a"/><circle cx="8.6" cy="7" r="1.6" fill="#4cae44"/><circle cx="12.2" cy="5.8" r="1.6" fill="#f5b020"/><ellipse cx="10.6" cy="12" rx="1.3" ry="1.1" fill="#fff" stroke="#88b4d0" stroke-width="0.6"/><path d="M18.8 2.4 L20.4 3.4 L11.4 19.8 L10.2 19.4Z" fill="#e8802a"/><path d="M17.8 0.2 C19 -0.2 21 0.8 21.3 2 L20.2 3.8 L18.4 2.6Z" fill="#c89a60"/></g></svg>
<svg class="a" style="left:1524px;top:1055px" width="18" height="11" viewBox="0 0 18 11"><path d="M1 10 L9 2 L17 10" fill="none" stroke="#fff" stroke-width="1.2"/></svg>
<svg class="a" style="left:1553px;top:1054px" width="21" height="14" viewBox="0 0 21 14"><path d="M4 13 C1 13 0 10 2 8.5 C2 5.5 5 4.5 7 5.5 C8.5 1 15 0.5 16.5 5 C19.5 5 21 8 20 10 C20 12 18.5 13 17 13Z" fill="#c8c8c8"/><path d="M4 13 C1 13 0 10.5 2 9 C5 8.5 9 9 12 10.5 C15 9 18.5 8.5 20 10.5 C19.5 12.5 18.5 13 17 13Z" fill="#f2f2f2"/></svg>
<svg class="a" style="left:1582px;top:1050px" width="22" height="22" viewBox="0 0 22 22"><path d="M1 3.5 L20.5 1 L20.5 19.5 L1 18Z" fill="none" stroke="#fff" stroke-width="1.1"/><path d="M6 10 C6 7 8.5 5.5 11 5.5 C13 5.5 14.5 6.5 15 8 M15 5.5 L15 8.3 L12.5 8.3 M15 11 C15 14 12.5 15.5 10 15.5 C8 15.5 6.5 14.5 6 13 M6 15.5 L6 12.8 L8.5 12.8" fill="none" stroke="#fff" stroke-width="1"/><circle cx="16.5" cy="16.5" r="4.6" fill="#f7930e"/></svg>
<svg class="a" style="left:1613px;top:1053px" width="21" height="15" viewBox="0 0 21 15"><path d="M3 1 L3 4 M5.5 1 L5.5 4 M2 4 L6.5 4 L6.5 6.5 C6.5 8 5.5 8.5 4.3 8.5 C3 8.5 2 8 2 6.5Z M4.3 8.5 L4.3 14" fill="none" stroke="#fff" stroke-width="1.1"/><rect x="6" y="3.5" width="13" height="9" fill="none" stroke="#fff" stroke-width="1.1"/><rect x="8" y="5.5" width="6" height="5" fill="#fff"/><rect x="19" y="6" width="1.5" height="4" fill="#fff"/></svg>
<svg class="a" style="left:1645px;top:1053px" width="17" height="16" viewBox="0 0 17 16"><path d="M1 15.5 C1 8 7 1.5 16 1.5 M4 15.5 C4 9.5 9 4.5 16 4.5 M7 15.5 C7 11 10.5 7.5 16 7.5 M10 15.5 C10 12.5 12.5 10.5 16 10.5" fill="none" stroke="#fff" stroke-width="1" opacity="0.95"/><circle cx="15" cy="14.5" r="1.3" fill="#fff"/></svg>
<svg class="a" style="left:1672px;top:1051px" width="21" height="20" viewBox="0 0 21 20"><path d="M1 7 L5 7 L9 2.5 L9 17.5 L5 13 L1 13Z" fill="none" stroke="#fff" stroke-width="1.1"/><path d="M11.5 8 C12.5 9 12.5 11 11.5 12 M14 5.5 C16 8 16 12 14 14.5 M16.5 2.5 C20 6.5 20 13.5 16.5 17.5" fill="none" stroke="#fff" stroke-width="1.1"/></svg>
<svg class="a" style="left:1814px;top:1053px" width="32" height="24" viewBox="0 0 32 24"><path d="M0.5 1 L2.5 2 L2.5 15.5 L0.5 15.5Z M3.5 6 L5.5 6 L8.5 12 L11.5 6 L13.5 6 L13.5 15.5 L11.5 15.5 L11.5 10 L9 15 L8 15 L5.5 10 L5.5 15.5 L3.5 15.5Z M14.5 3 L17 0.5 L17 11 L14.5 15.5Z" fill="#fff"/><circle cx="23" cy="14.5" r="6" fill="#141414" stroke="#a8a8a8" stroke-width="1"/><path d="M22 12 L23.6 11.2 L23.6 17.5" fill="none" stroke="#f0e0a0" stroke-width="1"/></svg>
<svg class="a" style="left:1868px;top:1050px" width="22" height="23" viewBox="0 0 22 23"><path d="M1 1 L21 1 L21 17 L14 17 L11 20.5 L8 17 L1 17Z" fill="#fff"/><g fill="#222" shape-rendering="crispEdges"><rect x="5" y="5" width="12" height="1"/><rect x="5" y="9" width="12" height="1"/><rect x="5" y="13" width="9" height="1"/></g></svg>
<div class="t" style="left:1706px;top:1052px;color:#fff;font-size:14px;line-height:18px">ENG</div>
<div class="t" style="left:1752px;top:1052px;color:#fff;font-size:14px;line-height:18px">14:03</div>
<div class="a" style="left:1914px;top:1043px;width:1px;height:37px;background:#6a6c6c"></div>
</body></html>
